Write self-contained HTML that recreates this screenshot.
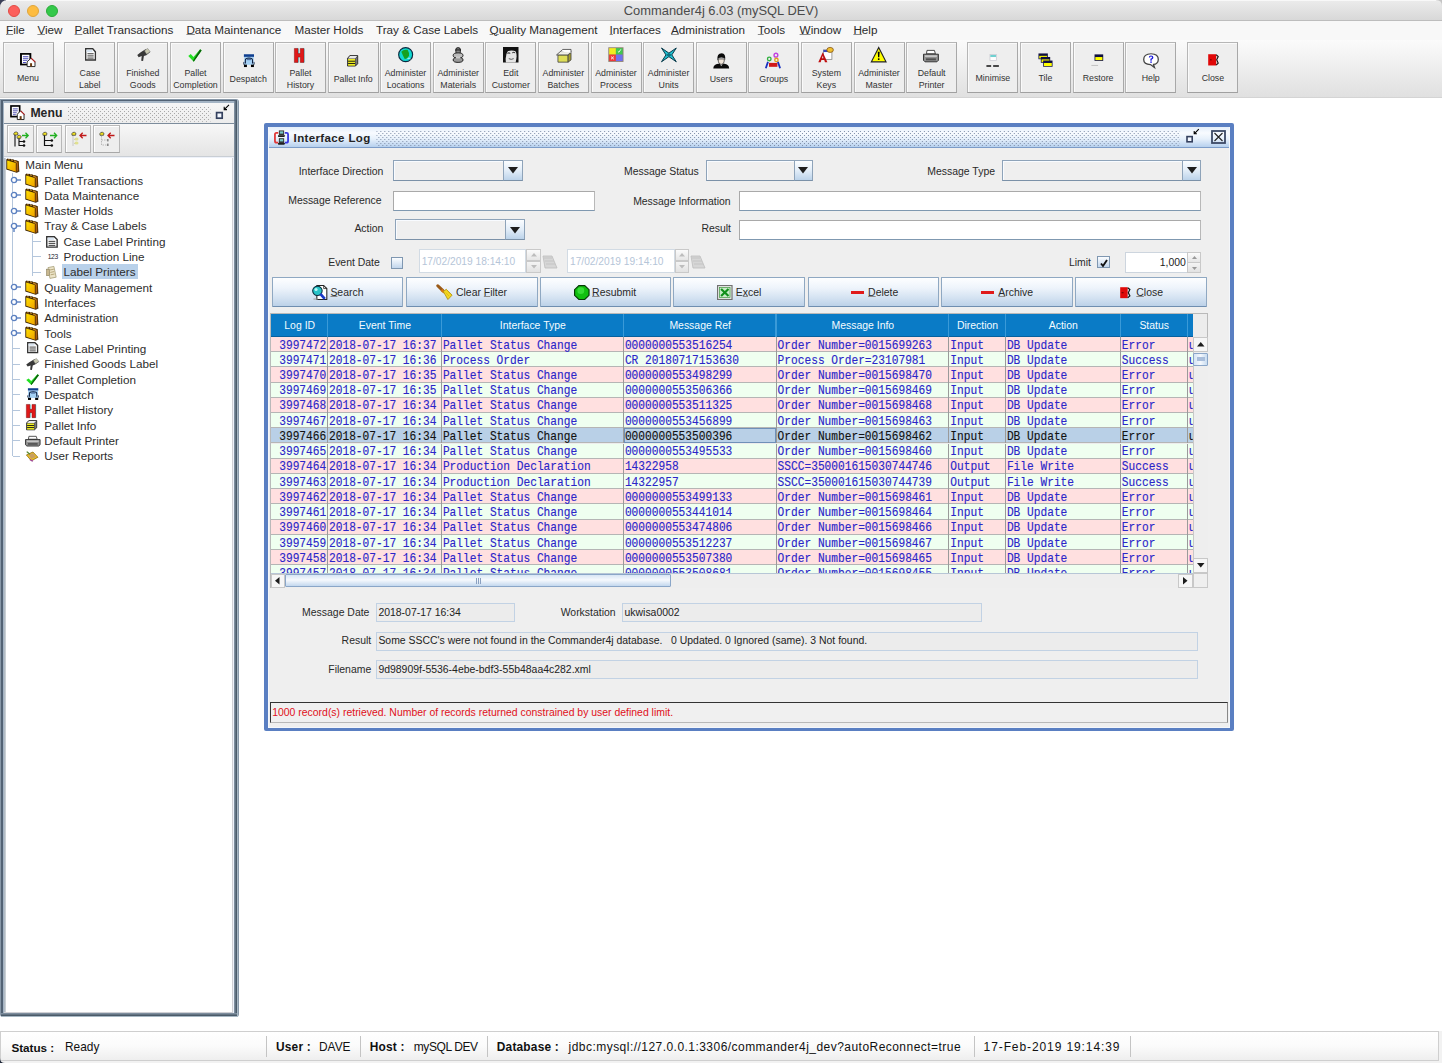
<!DOCTYPE html><html><head><meta charset="utf-8"><style>
*{box-sizing:border-box;margin:0;padding:0}
html,body{width:1442px;height:1063px;overflow:hidden;background:#fff;font-family:"Liberation Sans",sans-serif;color:#222}
.a{position:absolute;display:block}
.t{position:absolute;white-space:pre}
svg.a{overflow:visible}
u{text-decoration:underline;text-decoration-color:#8a8a8a;text-decoration-thickness:1px;text-underline-offset:0.4px}
</style></head><body>
<svg width="0" height="0" style="position:absolute"><defs><linearGradient id="fg" x1="0" y1="0" x2="1" y2="1"><stop offset="0" stop-color="#ffe000"/><stop offset="1" stop-color="#f0a000"/></linearGradient></defs></svg>
<div class="a" style="left:0.00px;top:0.00px;width:1442.00px;height:21.00px;background:linear-gradient(#ececec,#d8d8d8);border-bottom:1px solid #bdbdbd"></div>
<div class="a" style="left:7.60px;top:4.60px;width:12.00px;height:12.00px;border-radius:50%;background:#fc605c;border:0.5px solid #e24b45"></div>
<div class="a" style="left:26.70px;top:4.60px;width:12.00px;height:12.00px;border-radius:50%;background:#fdbc40;border:0.5px solid #e0a53a"></div>
<div class="a" style="left:45.80px;top:4.60px;width:12.00px;height:12.00px;border-radius:50%;background:#34c84a;border:0.5px solid #2aac38"></div>
<div class="t" style="top:3.63px;font-size:12.9px;line-height:14.41px;color:#4b4b4b;font-family:'Liberation Sans',sans-serif;left:421.00px;width:600px;text-align:center;">Commander4j 6.03 (mySQL DEV)</div>
<svg class="a" style="left:0.00px;top:0.00px" width="8.00" height="8.00" viewBox="0 0 8 8"><path d="M0 0 H8 Q0 0 0 8Z" fill="#3a4058"/></svg>
<div class="a" style="left:6.00px;top:0.00px;width:1430.00px;height:1.20px;background:#f8f8f8"></div>
<svg class="a" style="left:1436.00px;top:0.00px" width="6.00" height="6.00" viewBox="0 0 6 6"><path d="M6 0 H0 Q6 0 6 6Z" fill="#c4c4c4"/></svg>
<div class="a" style="left:0.00px;top:21.00px;width:1442.00px;height:19.00px;background:#f8f8f8"></div>
<div class="t" style="top:23.11px;font-size:11.7px;line-height:13.07px;color:#2b2b2b;font-family:'Liberation Sans',sans-serif;left:6.00px;"><u>F</u>ile</div>
<div class="t" style="top:23.11px;font-size:11.7px;line-height:13.07px;color:#2b2b2b;font-family:'Liberation Sans',sans-serif;left:37.40px;"><u>V</u>iew</div>
<div class="t" style="top:23.11px;font-size:11.7px;line-height:13.07px;color:#2b2b2b;font-family:'Liberation Sans',sans-serif;left:74.60px;"><u>P</u>allet Transactions</div>
<div class="t" style="top:23.11px;font-size:11.7px;line-height:13.07px;color:#2b2b2b;font-family:'Liberation Sans',sans-serif;left:186.40px;"><u>D</u>ata Maintenance</div>
<div class="t" style="top:23.11px;font-size:11.7px;line-height:13.07px;color:#2b2b2b;font-family:'Liberation Sans',sans-serif;left:294.40px;">Master Holds</div>
<div class="t" style="top:23.11px;font-size:11.7px;line-height:13.07px;color:#2b2b2b;font-family:'Liberation Sans',sans-serif;left:376.00px;">Tray &amp; Case Labels</div>
<div class="t" style="top:23.11px;font-size:11.7px;line-height:13.07px;color:#2b2b2b;font-family:'Liberation Sans',sans-serif;left:489.60px;"><u>Q</u>uality Management</div>
<div class="t" style="top:23.11px;font-size:11.7px;line-height:13.07px;color:#2b2b2b;font-family:'Liberation Sans',sans-serif;left:609.60px;"><u>I</u>nterfaces</div>
<div class="t" style="top:23.11px;font-size:11.7px;line-height:13.07px;color:#2b2b2b;font-family:'Liberation Sans',sans-serif;left:671.00px;"><u>A</u>dministration</div>
<div class="t" style="top:23.11px;font-size:11.7px;line-height:13.07px;color:#2b2b2b;font-family:'Liberation Sans',sans-serif;left:757.80px;"><u>T</u>ools</div>
<div class="t" style="top:23.11px;font-size:11.7px;line-height:13.07px;color:#2b2b2b;font-family:'Liberation Sans',sans-serif;left:799.60px;"><u>W</u>indow</div>
<div class="t" style="top:23.11px;font-size:11.7px;line-height:13.07px;color:#2b2b2b;font-family:'Liberation Sans',sans-serif;left:853.40px;"><u>H</u>elp</div>
<div class="a" style="left:0.00px;top:40.00px;width:1442.00px;height:58.00px;background:linear-gradient(#fbfbfb,#e0e0e0);border-bottom:1px solid #d4d4d4"></div>
<div class="a" style="left:2.50px;top:42.20px;width:51.00px;height:51.00px;background:#eeeeee;border:1px solid #b6b6b6;border-right-color:#a8a8a8;border-bottom-color:#a0a0a0;box-shadow:inset 1px 1px 0 #fafafa"></div>
<svg class="a" style="left:20px;top:53.3px" width="15.8" height="14.2" viewBox="0 0 16 16" preserveAspectRatio="none"><rect x="1" y="1" width="9.5" height="12" fill="#fff" stroke="#000" stroke-width="1.9"/>
<path d="M3 4.2h5.5M3 6.4h5.5M3 8.6h4.5M3 10.8h3" stroke="#4848b8" stroke-width="1.1"/>
<path d="M7.2 10 L11.2 5.8 L15.2 10 V15.3 H7.2 Z" fill="#fff" stroke="#222" stroke-width="1"/>
<path d="M11.2 5.8 L15.5 10.3" stroke="#b02020" stroke-width="1.3"/>
<rect x="10.2" y="11.5" width="2" height="3.8" fill="#6b3a10"/></svg>
<div class="t" style="top:74.14px;font-size:8.8px;line-height:9.83px;color:#333;font-family:'Liberation Sans',sans-serif;left:-272.00px;width:600px;text-align:center;transform:scaleY(1.08);transform-origin:0 80%;">Menu</div>
<div class="a" style="left:64.30px;top:42.20px;width:51.00px;height:51.00px;background:#eeeeee;border:1px solid #b6b6b6;border-right-color:#a8a8a8;border-bottom-color:#a0a0a0;box-shadow:inset 1px 1px 0 #fafafa"></div>
<svg class="a" style="left:85px;top:47.9px" width="11.1" height="12.8" viewBox="0 0 16 16" preserveAspectRatio="none"><path d="M1 1 H11.2 L15 4.8 V15 H1 Z" fill="#fff" stroke="#333" stroke-width="1.9"/>
<rect x="2.2" y="2.2" width="8.5" height="3" fill="#d8e4f0"/>
<path d="M3.5 7.2 H12.5 M3.5 9.9 H12.5 M3.5 12.6 H12.5" stroke="#222" stroke-width="1.2"/></svg>
<div class="t" style="top:68.64px;font-size:8.8px;line-height:9.83px;color:#333;font-family:'Liberation Sans',sans-serif;left:-210.20px;width:600px;text-align:center;transform:scaleY(1.08);transform-origin:0 80%;">Case</div>
<div class="t" style="top:80.54px;font-size:8.8px;line-height:9.83px;color:#333;font-family:'Liberation Sans',sans-serif;left:-210.20px;width:600px;text-align:center;transform:scaleY(1.08);transform-origin:0 80%;">Label</div>
<div class="a" style="left:117.30px;top:42.20px;width:51.00px;height:51.00px;background:#eeeeee;border:1px solid #b6b6b6;border-right-color:#a8a8a8;border-bottom-color:#a0a0a0;box-shadow:inset 1px 1px 0 #fafafa"></div>
<svg class="a" style="left:137px;top:47.9px" width="13.5" height="13.3" viewBox="0 0 16 16" preserveAspectRatio="none"><path d="M0.3 8.5 L4 5.5 L10 1.5 L15.7 4.8 L11 8.6 L8.2 9.6 L7.2 15.7 L5 15.2 L5.6 9.6 L2 11 Z" fill="#383838"/>
<path d="M8.8 3.2 L12.6 0.5 L15.7 4.5 L11.4 7.4 Z" fill="#c8c8b0" stroke="#666" stroke-width="0.5"/></svg>
<div class="t" style="top:68.64px;font-size:8.8px;line-height:9.83px;color:#333;font-family:'Liberation Sans',sans-serif;left:-157.20px;width:600px;text-align:center;transform:scaleY(1.08);transform-origin:0 80%;">Finished</div>
<div class="t" style="top:80.54px;font-size:8.8px;line-height:9.83px;color:#333;font-family:'Liberation Sans',sans-serif;left:-157.20px;width:600px;text-align:center;transform:scaleY(1.08);transform-origin:0 80%;">Goods</div>
<div class="a" style="left:170.00px;top:42.20px;width:51.00px;height:51.00px;background:#eeeeee;border:1px solid #b6b6b6;border-right-color:#a8a8a8;border-bottom-color:#a0a0a0;box-shadow:inset 1px 1px 0 #fafafa"></div>
<svg class="a" style="left:188.3px;top:48.7px" width="13.9" height="13.1" viewBox="0 0 16 16" preserveAspectRatio="none"><path d="M0.3 8.5 L3.2 6.2 L6.3 9.8 L14 0.3 L15.7 1.8 L6.6 15.7 Z" fill="#22e022"/>
<path d="M14 0.3 L15.7 1.8 L6.6 15.7 L5.8 14.2 Z" fill="#0b600b"/></svg>
<div class="t" style="top:68.64px;font-size:8.8px;line-height:9.83px;color:#333;font-family:'Liberation Sans',sans-serif;left:-104.50px;width:600px;text-align:center;transform:scaleY(1.08);transform-origin:0 80%;">Pallet</div>
<div class="t" style="top:80.54px;font-size:8.8px;line-height:9.83px;color:#333;font-family:'Liberation Sans',sans-serif;left:-104.50px;width:600px;text-align:center;transform:scaleY(1.08);transform-origin:0 80%;">Completion</div>
<div class="a" style="left:222.70px;top:42.20px;width:51.00px;height:51.00px;background:#eeeeee;border:1px solid #b6b6b6;border-right-color:#a8a8a8;border-bottom-color:#a0a0a0;box-shadow:inset 1px 1px 0 #fafafa"></div>
<svg class="a" style="left:243px;top:53.7px" width="11.9" height="13.3" viewBox="0 0 16 16" preserveAspectRatio="none"><rect x="1.2" y="0.3" width="13.6" height="3.2" fill="#0f3f90"/>
<path d="M1.5 3.5 H14.5 V13 H1.5Z" fill="#a4d0f4"/>
<path d="M3.2 11.5 V7.5 Q3.2 5 8 5 Q12.8 5 12.8 7.5 V11.5" fill="none" stroke="#102040" stroke-width="1.4"/>
<rect x="5.2" y="5.6" width="5.6" height="1.8" fill="#5070a0"/>
<path d="M1.2 9.5 Q0.3 13 2 13.2 M14.8 9.5 Q15.7 13 14 13.2" stroke="#102040" stroke-width="1.1" fill="none"/>
<rect x="1.3" y="12.8" width="4" height="2.9" fill="#000"/><rect x="10.7" y="12.8" width="4" height="2.9" fill="#000"/></svg>
<div class="t" style="top:75.34px;font-size:8.8px;line-height:9.83px;color:#333;font-family:'Liberation Sans',sans-serif;left:-51.80px;width:600px;text-align:center;transform:scaleY(1.08);transform-origin:0 80%;">Despatch</div>
<div class="a" style="left:275.00px;top:42.20px;width:51.00px;height:51.00px;background:#eeeeee;border:1px solid #b6b6b6;border-right-color:#a8a8a8;border-bottom-color:#a0a0a0;box-shadow:inset 1px 1px 0 #fafafa"></div>
<svg class="a" style="left:294px;top:47.6px" width="11.8" height="14.9" viewBox="0 0 16 16" preserveAspectRatio="none"><path d="M2 0.5 H6.8 V6 H9.8 V0.5 H14.5 V15.5 H9.8 V9.8 H6.8 V15.5 H2 Z" fill="#6ff0f8"/>
<path d="M0.5 0.5 H5.5 V6 H8.5 V0.5 H13.5 V15.5 H8.5 V9.8 H5.5 V15.5 H0.5 Z" fill="#e01818" stroke="#801010" stroke-width="0.6"/></svg>
<div class="t" style="top:68.64px;font-size:8.8px;line-height:9.83px;color:#333;font-family:'Liberation Sans',sans-serif;left:0.50px;width:600px;text-align:center;transform:scaleY(1.08);transform-origin:0 80%;">Pallet</div>
<div class="t" style="top:80.54px;font-size:8.8px;line-height:9.83px;color:#333;font-family:'Liberation Sans',sans-serif;left:0.50px;width:600px;text-align:center;transform:scaleY(1.08);transform-origin:0 80%;">History</div>
<div class="a" style="left:327.70px;top:42.20px;width:51.00px;height:51.00px;background:#eeeeee;border:1px solid #b6b6b6;border-right-color:#a8a8a8;border-bottom-color:#a0a0a0;box-shadow:inset 1px 1px 0 #fafafa"></div>
<svg class="a" style="left:346.8px;top:55.3px" width="11.3" height="11.7" viewBox="0 0 16 16" preserveAspectRatio="none"><path d="M0.8 4.5 L4 0.8 H15.2 V12 L12 15.2 H0.8 Z" fill="#444" stroke="#111" stroke-width="1"/>
<path d="M1.5 4.8 L4.3 1.5 H14.4 L11.6 4.8 Z" fill="#e8e8e8"/>
<rect x="1.6" y="5.4" width="9.8" height="9.2" fill="#f0ee20"/>
<path d="M1.6 8.5 H11.4 M1.6 11.6 H11.4" stroke="#111" stroke-width="1.3"/>
<path d="M12.2 5.4 L14.5 2.5 V11.5 L12.2 14.2Z" fill="#777"/></svg>
<div class="t" style="top:74.84px;font-size:8.8px;line-height:9.83px;color:#333;font-family:'Liberation Sans',sans-serif;left:53.20px;width:600px;text-align:center;transform:scaleY(1.08);transform-origin:0 80%;">Pallet Info</div>
<div class="a" style="left:380.00px;top:42.20px;width:51.00px;height:51.00px;background:#eeeeee;border:1px solid #b6b6b6;border-right-color:#a8a8a8;border-bottom-color:#a0a0a0;box-shadow:inset 1px 1px 0 #fafafa"></div>
<svg class="a" style="left:397.8px;top:47.2px" width="15.3" height="15.3" viewBox="0 0 16 16" preserveAspectRatio="none"><circle cx="8" cy="8" r="7.3" fill="#10d8d0" stroke="#0a2a40" stroke-width="1.2"/>
<path d="M3.5 5 Q6 2 10 3 Q12 6 11.5 9 Q10 12.5 7 12.5 Q5 9 3.5 5Z" fill="#16a01e"/>
<path d="M10 12 Q12 11 13 12.5" stroke="#d0f0f0" stroke-width="1" fill="none"/></svg>
<div class="t" style="top:68.64px;font-size:8.8px;line-height:9.83px;color:#333;font-family:'Liberation Sans',sans-serif;left:105.50px;width:600px;text-align:center;transform:scaleY(1.08);transform-origin:0 80%;">Administer</div>
<div class="t" style="top:80.54px;font-size:8.8px;line-height:9.83px;color:#333;font-family:'Liberation Sans',sans-serif;left:105.50px;width:600px;text-align:center;transform:scaleY(1.08);transform-origin:0 80%;">Locations</div>
<div class="a" style="left:432.70px;top:42.20px;width:51.00px;height:51.00px;background:#eeeeee;border:1px solid #b6b6b6;border-right-color:#a8a8a8;border-bottom-color:#a0a0a0;box-shadow:inset 1px 1px 0 #fafafa"></div>
<svg class="a" style="left:452px;top:46.8px" width="12.2" height="15.9" viewBox="0 0 16 16" preserveAspectRatio="none"><ellipse cx="8" cy="3" rx="3.2" ry="2.4" fill="#777" stroke="#111" stroke-width="1"/>
<rect x="5.2" y="3" width="5.6" height="3.5" fill="#888" stroke="#111" stroke-width="0.9"/>
<ellipse cx="8" cy="8.5" rx="6.5" ry="2.6" fill="#bbb" stroke="#111" stroke-width="1"/>
<ellipse cx="8" cy="13" rx="6.5" ry="2.5" fill="#999" stroke="#111" stroke-width="1"/>
<rect x="5" y="9.5" width="6" height="2" fill="#ccc"/></svg>
<div class="t" style="top:68.64px;font-size:8.8px;line-height:9.83px;color:#333;font-family:'Liberation Sans',sans-serif;left:158.20px;width:600px;text-align:center;transform:scaleY(1.08);transform-origin:0 80%;">Administer</div>
<div class="t" style="top:80.54px;font-size:8.8px;line-height:9.83px;color:#333;font-family:'Liberation Sans',sans-serif;left:158.20px;width:600px;text-align:center;transform:scaleY(1.08);transform-origin:0 80%;">Materials</div>
<div class="a" style="left:485.30px;top:42.20px;width:51.00px;height:51.00px;background:#eeeeee;border:1px solid #b6b6b6;border-right-color:#a8a8a8;border-bottom-color:#a0a0a0;box-shadow:inset 1px 1px 0 #fafafa"></div>
<svg class="a" style="left:503px;top:46.8px" width="15.5" height="15.5" viewBox="0 0 16 16" preserveAspectRatio="none"><rect x="0" y="0" width="16" height="16" fill="#111"/>
<path d="M3 16 Q2 8 5 4 Q9 1.5 13 4 Q15 9 13 16Z" fill="#e4e4e4"/>
<path d="M4.5 6.5 Q6 5.5 7.5 6.5 M9.5 6 Q11 5 12.5 6" stroke="#333" stroke-width="1"/>
<path d="M6 12 Q8.5 13.5 11 12" stroke="#555" stroke-width="1" fill="none"/>
<path d="M3 0 Q8 3 14 1 V5 Q9 2 3 5Z" fill="#111"/></svg>
<div class="t" style="top:68.64px;font-size:8.8px;line-height:9.83px;color:#333;font-family:'Liberation Sans',sans-serif;left:210.80px;width:600px;text-align:center;transform:scaleY(1.08);transform-origin:0 80%;">Edit</div>
<div class="t" style="top:80.54px;font-size:8.8px;line-height:9.83px;color:#333;font-family:'Liberation Sans',sans-serif;left:210.80px;width:600px;text-align:center;transform:scaleY(1.08);transform-origin:0 80%;">Customer</div>
<div class="a" style="left:537.90px;top:42.20px;width:51.00px;height:51.00px;background:#eeeeee;border:1px solid #b6b6b6;border-right-color:#a8a8a8;border-bottom-color:#a0a0a0;box-shadow:inset 1px 1px 0 #fafafa"></div>
<svg class="a" style="left:555.5px;top:48.7px" width="15.5" height="13.6" viewBox="0 0 16 16" preserveAspectRatio="none"><path d="M2 7 H12.5 V15.5 H2 Z" fill="#dede58" stroke="#444" stroke-width="0.9"/>
<path d="M12.5 7 L15.5 4.3 V12.8 L12.5 15.5Z" fill="#a8a030" stroke="#444" stroke-width="0.9"/>
<path d="M0.5 7 L4.5 3 H15.5 L12.5 7Z" fill="#f0f0e8" stroke="#444" stroke-width="0.9"/>
<path d="M4.5 3 L7 0.5 H15.5 V4.3" fill="#fff" stroke="#444" stroke-width="0.9"/></svg>
<div class="t" style="top:68.64px;font-size:8.8px;line-height:9.83px;color:#333;font-family:'Liberation Sans',sans-serif;left:263.40px;width:600px;text-align:center;transform:scaleY(1.08);transform-origin:0 80%;">Administer</div>
<div class="t" style="top:80.54px;font-size:8.8px;line-height:9.83px;color:#333;font-family:'Liberation Sans',sans-serif;left:263.40px;width:600px;text-align:center;transform:scaleY(1.08);transform-origin:0 80%;">Batches</div>
<div class="a" style="left:590.50px;top:42.20px;width:51.00px;height:51.00px;background:#eeeeee;border:1px solid #b6b6b6;border-right-color:#a8a8a8;border-bottom-color:#a0a0a0;box-shadow:inset 1px 1px 0 #fafafa"></div>
<svg class="a" style="left:607.9px;top:46.6px" width="15.8" height="15.2" viewBox="0 0 16 16" preserveAspectRatio="none"><rect x="0.3" y="0.3" width="15.4" height="15.4" fill="#908070"/>
<rect x="1.2" y="1.2" width="6.8" height="6.8" fill="#f0ee20"/><rect x="8" y="1.2" width="6.8" height="6.8" fill="#40c850"/>
<rect x="1.2" y="8" width="6.8" height="6.8" fill="#f03838"/><rect x="8" y="8" width="6.8" height="6.8" fill="#7070f0"/>
<path d="M10 4.5 L11 5.5 L13 2.5" stroke="#fff" stroke-width="0.9" fill="none"/><path d="M3 10 L6 13 M6 10 L3 13" stroke="#fff" stroke-width="0.9"/></svg>
<div class="t" style="top:68.64px;font-size:8.8px;line-height:9.83px;color:#333;font-family:'Liberation Sans',sans-serif;left:316.00px;width:600px;text-align:center;transform:scaleY(1.08);transform-origin:0 80%;">Administer</div>
<div class="t" style="top:80.54px;font-size:8.8px;line-height:9.83px;color:#333;font-family:'Liberation Sans',sans-serif;left:316.00px;width:600px;text-align:center;transform:scaleY(1.08);transform-origin:0 80%;">Process</div>
<div class="a" style="left:643.10px;top:42.20px;width:51.00px;height:51.00px;background:#eeeeee;border:1px solid #b6b6b6;border-right-color:#a8a8a8;border-bottom-color:#a0a0a0;box-shadow:inset 1px 1px 0 #fafafa"></div>
<svg class="a" style="left:660.6px;top:46.6px" width="15.8" height="15.8" viewBox="0 0 16 16" preserveAspectRatio="none"><path d="M0.5 1 L8 6.2 L15.5 1 L11 8 L15.5 15 L8 9.8 L0.5 15 L5 8Z" fill="#20c0d0" stroke="#083848" stroke-width="1"/>
<path d="M5 8 L8 6.2 L11 8 L8 9.8Z" fill="#0a7080"/></svg>
<div class="t" style="top:68.64px;font-size:8.8px;line-height:9.83px;color:#333;font-family:'Liberation Sans',sans-serif;left:368.60px;width:600px;text-align:center;transform:scaleY(1.08);transform-origin:0 80%;">Administer</div>
<div class="t" style="top:80.54px;font-size:8.8px;line-height:9.83px;color:#333;font-family:'Liberation Sans',sans-serif;left:368.60px;width:600px;text-align:center;transform:scaleY(1.08);transform-origin:0 80%;">Units</div>
<div class="a" style="left:695.70px;top:42.20px;width:51.00px;height:51.00px;background:#eeeeee;border:1px solid #b6b6b6;border-right-color:#a8a8a8;border-bottom-color:#a0a0a0;box-shadow:inset 1px 1px 0 #fafafa"></div>
<svg class="a" style="left:712.6px;top:52.6px" width="16.5" height="15.8" viewBox="0 0 16 16" preserveAspectRatio="none"><path d="M0.3 15.7 Q0.5 11.5 5 11 H11 Q15.5 11.5 15.7 15.7Z" fill="#0a0a0a"/>
<path d="M6.5 11 L8 13.5 L9.5 11Z" fill="#ddd"/>
<path d="M5 6 Q5 11.5 8 11.5 Q11 11.5 11 6Z" fill="#f0e4d8" stroke="#222" stroke-width="0.7"/>
<path d="M4.3 7.5 Q3.5 0.3 8.5 0.3 Q12.5 0.5 11.8 7 L10.8 5 Q8 4 5.5 5Z" fill="#0a0a0a"/></svg>
<div class="t" style="top:74.84px;font-size:8.8px;line-height:9.83px;color:#333;font-family:'Liberation Sans',sans-serif;left:421.20px;width:600px;text-align:center;transform:scaleY(1.08);transform-origin:0 80%;">Users</div>
<div class="a" style="left:748.30px;top:42.20px;width:51.00px;height:51.00px;background:#eeeeee;border:1px solid #b6b6b6;border-right-color:#a8a8a8;border-bottom-color:#a0a0a0;box-shadow:inset 1px 1px 0 #fafafa"></div>
<svg class="a" style="left:765.3px;top:52.6px" width="15.9" height="15.8" viewBox="0 0 16 16" preserveAspectRatio="none"><circle cx="11" cy="2.2" r="1.9" fill="none" stroke="#c040e0" stroke-width="1.4"/>
<circle cx="4.3" cy="6" r="1.8" fill="none" stroke="#30b040" stroke-width="1.4"/>
<circle cx="11.5" cy="7" r="1.7" fill="none" stroke="#e0a020" stroke-width="1.4"/>
<path d="M4 10 H12.5 V14 H4Z" fill="#d01818"/>
<path d="M0.8 15.5 L3 9 M15.2 15.5 L13 9" stroke="#1830c0" stroke-width="1.8"/></svg>
<div class="t" style="top:74.84px;font-size:8.8px;line-height:9.83px;color:#333;font-family:'Liberation Sans',sans-serif;left:473.80px;width:600px;text-align:center;transform:scaleY(1.08);transform-origin:0 80%;">Groups</div>
<div class="a" style="left:800.90px;top:42.20px;width:51.00px;height:51.00px;background:#eeeeee;border:1px solid #b6b6b6;border-right-color:#a8a8a8;border-bottom-color:#a0a0a0;box-shadow:inset 1px 1px 0 #fafafa"></div>
<svg class="a" style="left:818px;top:46.8px" width="15.9" height="15.5" viewBox="0 0 16 16" preserveAspectRatio="none"><rect x="5.5" y="3" width="8.5" height="10" fill="#fff" stroke="#888" stroke-width="0.8"/>
<rect x="5.5" y="3" width="8.5" height="2.2" fill="#3848b8"/>
<path d="M0.3 15.7 L4.8 5.5 L9.5 15.7 H7 L6.3 13.5 H3.4 L2.7 15.7Z M4 11.5 H5.7 L4.85 9Z" fill="#c01010"/>
<ellipse cx="12.2" cy="3" rx="3.3" ry="2.6" fill="#f0c030" stroke="#805010" stroke-width="0.8"/></svg>
<div class="t" style="top:68.64px;font-size:8.8px;line-height:9.83px;color:#333;font-family:'Liberation Sans',sans-serif;left:526.40px;width:600px;text-align:center;transform:scaleY(1.08);transform-origin:0 80%;">System</div>
<div class="t" style="top:80.54px;font-size:8.8px;line-height:9.83px;color:#333;font-family:'Liberation Sans',sans-serif;left:526.40px;width:600px;text-align:center;transform:scaleY(1.08);transform-origin:0 80%;">Keys</div>
<div class="a" style="left:853.50px;top:42.20px;width:51.00px;height:51.00px;background:#eeeeee;border:1px solid #b6b6b6;border-right-color:#a8a8a8;border-bottom-color:#a0a0a0;box-shadow:inset 1px 1px 0 #fafafa"></div>
<svg class="a" style="left:870.9px;top:46.8px" width="15.4" height="15.5" viewBox="0 0 16 16" preserveAspectRatio="none"><path d="M8 0.6 L15.6 15.3 H0.4Z" fill="#ffff00" stroke="#222" stroke-width="1.2"/>
<path d="M7 5 H9 L8.6 10.5 H7.4Z" fill="#000"/><rect x="7.2" y="11.7" width="1.6" height="1.7" fill="#000"/></svg>
<div class="t" style="top:68.64px;font-size:8.8px;line-height:9.83px;color:#333;font-family:'Liberation Sans',sans-serif;left:579.00px;width:600px;text-align:center;transform:scaleY(1.08);transform-origin:0 80%;">Administer</div>
<div class="t" style="top:80.54px;font-size:8.8px;line-height:9.83px;color:#333;font-family:'Liberation Sans',sans-serif;left:579.00px;width:600px;text-align:center;transform:scaleY(1.08);transform-origin:0 80%;">Master</div>
<div class="a" style="left:906.10px;top:42.20px;width:51.00px;height:51.00px;background:#eeeeee;border:1px solid #b6b6b6;border-right-color:#a8a8a8;border-bottom-color:#a0a0a0;box-shadow:inset 1px 1px 0 #fafafa"></div>
<svg class="a" style="left:923.3px;top:50.1px" width="15.9" height="12.2" viewBox="0 0 16 16" preserveAspectRatio="none"><path d="M4 0.5 H11.5 L12.5 5 H3.5Z" fill="#fff" stroke="#333" stroke-width="1"/>
<path d="M0.5 5.5 H15.5 V13.5 L14 15.5 H2 L0.5 13.5Z" fill="#909090" stroke="#222" stroke-width="1"/>
<rect x="2" y="7" width="12" height="2" fill="#d0d0d0"/>
<rect x="3" y="11" width="10" height="2.5" fill="#505050"/></svg>
<div class="t" style="top:68.64px;font-size:8.8px;line-height:9.83px;color:#333;font-family:'Liberation Sans',sans-serif;left:631.60px;width:600px;text-align:center;transform:scaleY(1.08);transform-origin:0 80%;">Default</div>
<div class="t" style="top:80.54px;font-size:8.8px;line-height:9.83px;color:#333;font-family:'Liberation Sans',sans-serif;left:631.60px;width:600px;text-align:center;transform:scaleY(1.08);transform-origin:0 80%;">Printer</div>
<div class="a" style="left:967.40px;top:42.20px;width:51.00px;height:51.00px;background:#eeeeee;border:1px solid #b6b6b6;border-right-color:#a8a8a8;border-bottom-color:#a0a0a0;box-shadow:inset 1px 1px 0 #fafafa"></div>
<svg class="a" style="left:986.1px;top:54.1px" width="13.3" height="12.8" viewBox="0 0 16 16" preserveAspectRatio="none"><rect x="4.8" y="0.8" width="7.6" height="7.5" fill="#fff" stroke="#c8c8d0" stroke-width="0.9"/>
<rect x="5.2" y="1.2" width="6.8" height="2.6" fill="#70d0d0"/>
<path d="M0.5 15 H6.2 M8.6 15 H15.5" stroke="#111" stroke-width="1.6"/></svg>
<div class="t" style="top:73.54px;font-size:8.8px;line-height:9.83px;color:#333;font-family:'Liberation Sans',sans-serif;left:692.90px;width:600px;text-align:center;transform:scaleY(1.08);transform-origin:0 80%;">Minimise</div>
<div class="a" style="left:1020.00px;top:42.20px;width:51.00px;height:51.00px;background:#eeeeee;border:1px solid #b6b6b6;border-right-color:#a8a8a8;border-bottom-color:#a0a0a0;box-shadow:inset 1px 1px 0 #fafafa"></div>
<svg class="a" style="left:1038px;top:52.7px" width="15" height="14.2" viewBox="0 0 16 16" preserveAspectRatio="none"><rect x="0.5" y="0.5" width="10" height="6.5" fill="#101040"/><rect x="1.3" y="3.2" width="8.4" height="3" fill="#f0f000"/>
<rect x="3" y="4.5" width="10" height="6.5" fill="#101040"/><rect x="3.8" y="7.2" width="8.4" height="3" fill="#f0f000"/>
<rect x="5.5" y="8.5" width="10" height="7" fill="#101040"/><rect x="6.3" y="11.3" width="8.4" height="3.4" fill="#ffff00"/></svg>
<div class="t" style="top:73.54px;font-size:8.8px;line-height:9.83px;color:#333;font-family:'Liberation Sans',sans-serif;left:745.50px;width:600px;text-align:center;transform:scaleY(1.08);transform-origin:0 80%;">Tile</div>
<div class="a" style="left:1072.60px;top:42.20px;width:51.00px;height:51.00px;background:#eeeeee;border:1px solid #b6b6b6;border-right-color:#a8a8a8;border-bottom-color:#a0a0a0;box-shadow:inset 1px 1px 0 #fafafa"></div>
<svg class="a" style="left:1091.3px;top:54.3px" width="12.6" height="12.2" viewBox="0 0 16 16" preserveAspectRatio="none"><rect x="4.5" y="0.5" width="11" height="8.5" fill="#101040"/><rect x="5.5" y="4" width="9" height="4" fill="#ffff00"/>
<path d="M0.5 15 H9" stroke="#c0c0c0" stroke-width="1.3"/></svg>
<div class="t" style="top:73.54px;font-size:8.8px;line-height:9.83px;color:#333;font-family:'Liberation Sans',sans-serif;left:798.10px;width:600px;text-align:center;transform:scaleY(1.08);transform-origin:0 80%;">Restore</div>
<div class="a" style="left:1125.20px;top:42.20px;width:51.00px;height:51.00px;background:#eeeeee;border:1px solid #b6b6b6;border-right-color:#a8a8a8;border-bottom-color:#a0a0a0;box-shadow:inset 1px 1px 0 #fafafa"></div>
<svg class="a" style="left:1143.3px;top:52.9px" width="16" height="15" viewBox="0 0 16 16" preserveAspectRatio="none"><path d="M8 0.8 C13 0.8 15.3 3.5 15.3 7 C15.3 10 13 12 10.5 12.2 L11.5 15.5 L7.5 12.3 C3 12.3 0.7 10 0.7 7 C0.7 3.5 3 0.8 8 0.8Z" fill="#fff" stroke="#444" stroke-width="1.3"/>
<path d="M5.8 4.8 Q5.8 2.6 8 2.6 Q10.4 2.6 10.4 4.7 Q10.4 6.3 8.7 6.8 V8.3 H7.4 V6 Q9 5.6 9 4.8 Q9 3.8 8 3.8 Q7.1 3.8 7.1 4.8Z" fill="#1818e0"/><rect x="7.3" y="9" width="1.5" height="1.5" fill="#1818e0"/></svg>
<div class="t" style="top:73.54px;font-size:8.8px;line-height:9.83px;color:#333;font-family:'Liberation Sans',sans-serif;left:850.70px;width:600px;text-align:center;transform:scaleY(1.08);transform-origin:0 80%;">Help</div>
<div class="a" style="left:1187.40px;top:42.20px;width:51.00px;height:51.00px;background:#eeeeee;border:1px solid #b6b6b6;border-right-color:#a8a8a8;border-bottom-color:#a0a0a0;box-shadow:inset 1px 1px 0 #fafafa"></div>
<svg class="a" style="left:1207.8px;top:54.3px" width="10.7" height="11.7" viewBox="0 0 16 16" preserveAspectRatio="none"><rect x="0.3" y="0.3" width="12" height="15.4" fill="#e00808"/>
<path d="M12.3 1 L15.3 3.5 L13 8 L15.3 12.5 L12.3 15" stroke="#111" stroke-width="1.6" fill="none"/>
<rect x="3" y="7.2" width="2.5" height="1.5" fill="#700"/></svg>
<div class="t" style="top:73.54px;font-size:8.8px;line-height:9.83px;color:#333;font-family:'Liberation Sans',sans-serif;left:912.90px;width:600px;text-align:center;transform:scaleY(1.08);transform-origin:0 80%;">Close</div><div class="a" style="left:0.00px;top:98.60px;width:239.20px;height:918.40px;background:#8898a8;border-radius:0 3px 3px 3px"></div>
<div class="a" style="left:1.00px;top:99.60px;width:1.80px;height:916.40px;background:#526274"></div>
<div class="a" style="left:1.00px;top:99.60px;width:236.20px;height:1.80px;background:#526274"></div>
<div class="a" style="left:2.80px;top:101.40px;width:1.50px;height:913.00px;background:#a4b4c4"></div>
<div class="a" style="left:2.80px;top:101.40px;width:234.00px;height:1.50px;background:#a4b4c4"></div>
<div class="a" style="left:234.00px;top:101.40px;width:3.00px;height:913.00px;background:linear-gradient(90deg,#8a9aaa,#3e4e5c)"></div>
<div class="a" style="left:237.00px;top:99.60px;width:1.20px;height:916.00px;background:#a8b8c4"></div>
<div class="a" style="left:1.00px;top:1013.40px;width:236.00px;height:3.00px;background:linear-gradient(#8a9aaa,#3e4e5c)"></div>
<div class="a" style="left:1.00px;top:1016.20px;width:237.00px;height:0.80px;background:#a8b8c4"></div>
<div class="a" style="left:4.30px;top:102.90px;width:229.70px;height:910.50px;background:#eef2fa"></div>
<div class="a" style="left:4.30px;top:102.90px;width:229.70px;height:20.30px;background:linear-gradient(#f6f6f6,#ececec)"></div>
<div class="a" style="left:4.30px;top:123.00px;width:229.70px;height:1.20px;background:#7c8c9c"></div>
<svg class="a" style="left:9.50px;top:105.40px" width="15.50" height="15.50" viewBox="0 0 16 16"><rect x="1" y="1" width="9" height="11" fill="#fff" stroke="#000" stroke-width="1.7"/>
<path d="M3 4h5M3 6h5M3 8h4M3 10h3" stroke="#5050b0" stroke-width="1"/>
<path d="M7.5 9.5 L11 6 L14.5 9.5 V15 H7.5 Z" fill="#fff" stroke="#222" stroke-width="1"/>
<path d="M11 6 L15 10" stroke="#b02020" stroke-width="1.2"/>
<rect x="10" y="11.5" width="2" height="3.5" fill="#6b3a10"/></svg>
<div class="t" style="top:107.06px;font-size:12.2px;line-height:13.63px;color:#262626;font-family:'Liberation Sans',sans-serif;font-weight:bold;letter-spacing:0.05px;left:30.40px;">Menu</div>
<svg class="a" style="left:68.00px;top:106.80px" width="142.50" height="14.80" viewBox="0 0 142.5 14.8"><defs><pattern id="dp1" width="4" height="4" patternUnits="userSpaceOnUse"><rect x="0" y="0" width="1" height="1" fill="#a8a8a8"/><rect x="2" y="2" width="1" height="1" fill="#a8a8a8"/></pattern></defs><rect width="142.5" height="14.8" fill="url(#dp1)"/></svg>
<svg class="a" style="left:213.00px;top:103.00px" width="18.00" height="18.00" viewBox="0 0 18 18"><rect x="3.6" y="9.6" width="5.6" height="5.6" fill="#f4f8ff" stroke="#34405e" stroke-width="1.7"/><path d="M16 1.8 L11.2 6.6 M11.2 3.8 V6.6 H14" stroke="#000" stroke-width="1.1" fill="none"/></svg>
<div class="a" style="left:4.30px;top:124.20px;width:229.70px;height:32.60px;background:linear-gradient(#f7f7f7,#e4e4e4)"></div>
<div class="a" style="left:7.20px;top:125.40px;width:26.80px;height:27.40px;background:#eeeeee;border:1px solid #b8b8b8;border-bottom-color:#a8a8a8;box-shadow:inset 1px 1px 0 #fff"></div>
<div class="a" style="left:35.60px;top:125.40px;width:26.80px;height:27.40px;background:#eeeeee;border:1px solid #b8b8b8;border-bottom-color:#a8a8a8;box-shadow:inset 1px 1px 0 #fff"></div>
<div class="a" style="left:64.50px;top:125.40px;width:26.80px;height:27.40px;background:#eeeeee;border:1px solid #b8b8b8;border-bottom-color:#a8a8a8;box-shadow:inset 1px 1px 0 #fff"></div>
<div class="a" style="left:93.30px;top:125.40px;width:26.80px;height:27.40px;background:#eeeeee;border:1px solid #b8b8b8;border-bottom-color:#a8a8a8;box-shadow:inset 1px 1px 0 #fff"></div>
<svg class="a" style="left:13.20px;top:131.20px" width="16.00" height="16.00" viewBox="0 0 16 16"><path d="M2 3.5 V15.5" stroke="#111" stroke-width="1.1"/><path d="M6 7 V14.5 H10.5 M6 10.5 H10.5" stroke="#111" stroke-width="1.1" fill="none"/><circle cx="11" cy="10.5" r="1.3" fill="#111"/><circle cx="11" cy="14.5" r="1.3" fill="#111"/><path d="M0.8 2.5 Q1.5 0.5 3.5 1 L5 2 L4.5 4 H1Z" fill="#f0e020" stroke="#333" stroke-width="0.7"/><path d="M4 5.8 Q4.7 3.8 6.7 4.3 L8.2 5.3 L7.7 7.3 H4.2Z" fill="#f0e020" stroke="#333" stroke-width="0.7"/><path d="M9 4.5 H15 M12.5 1.8 L15.2 4.5 L12.5 7.2" stroke="#20b020" stroke-width="1.3" fill="none"/></svg>
<svg class="a" style="left:41.60px;top:131.20px" width="16.00" height="16.00" viewBox="0 0 16 16"><path d="M2.5 4 V14.5 H9.5 M2.5 9.5 H9.5" stroke="#111" stroke-width="1.2" fill="none"/><circle cx="9.8" cy="9.5" r="1.3" fill="#111"/><circle cx="9.8" cy="14.5" r="1.3" fill="#111"/><path d="M0.8 2.8 Q1.5 0.8 3.5 1.3 L5 2.3 L4.5 4.3 H1Z" fill="#f0e020" stroke="#333" stroke-width="0.7"/><path d="M8 4.5 H14.5 M12 1.8 L14.7 4.5 L12 7.2" stroke="#20b020" stroke-width="1.3" fill="none"/></svg>
<svg class="a" style="left:70.50px;top:131.20px" width="16.00" height="16.00" viewBox="0 0 16 16"><path d="M2 4 V15" stroke="#c8c8c8" stroke-width="1"/><path d="M3 8.5 H7 M3 12.5 H7" stroke="#c8c8c8" stroke-width="1"/><ellipse cx="5.5" cy="8" rx="2" ry="1.5" fill="#e0e090"/><ellipse cx="5.5" cy="12" rx="2" ry="1.5" fill="#e0e090"/><path d="M0.8 2.8 Q1.5 0.8 3.5 1.3 L5 2.3 L4.5 4.3 H1Z" fill="#f0e020" stroke="#333" stroke-width="0.7"/><path d="M9 4.5 H15.5 M11.7 1.8 L9 4.5 L11.7 7.2" stroke="#c01818" stroke-width="1.3" fill="none"/></svg>
<svg class="a" style="left:99.30px;top:131.20px" width="16.00" height="16.00" viewBox="0 0 16 16"><path d="M2.5 5 V14 H8 M2.5 9 H8" stroke="#b8b8b8" stroke-width="1" fill="none" stroke-dasharray="1.5 1"/><rect x="8" y="8" width="1.6" height="2.4" fill="#888"/><rect x="8" y="12.6" width="1.6" height="2.4" fill="#888"/><path d="M0.8 2.8 Q1.5 0.8 3.5 1.3 L5 2.3 L4.5 4.3 H1Z" fill="#f0e020" stroke="#333" stroke-width="0.7"/><path d="M9 4.5 H15.5 M11.7 1.8 L9 4.5 L11.7 7.2" stroke="#c01818" stroke-width="1.3" fill="none"/></svg>
<div class="a" style="left:4.30px;top:156.30px;width:229.70px;height:1.20px;background:#c9ced4"></div>
<div class="a" style="left:4.30px;top:157.50px;width:228.60px;height:855.00px;background:linear-gradient(90deg,#a8b2bc,#d4dade 2px,#fff 2.2px);border-right:1.3px solid #d0d0d4;border-bottom:1.3px solid #d0d0d4"></div>
<div class="a" style="left:12.00px;top:173.00px;width:1.00px;height:282.79px;background:#b4c6dc"></div>
<div class="a" style="left:31.60px;top:234.06px;width:1.00px;height:41.95px;background:#b4c6dc"></div>
<svg class="a" style="left:6.10px;top:157.60px" width="14.00" height="15.00" viewBox="0 0 14 15"><path d="M0.3 1.6 L1.6 0.4 L3 0.9 L4.2 0.7 L5.6 1.4 L7 1.3 L8.4 2 L9.6 1.9 L12.8 3.2 L13.3 13.3 L10.7 14.8 L0.3 11.4 Z" fill="#3e2400"/>
<path d="M1.2 2.4 L9.8 5.1 L9.8 13.8 L1.2 10.8 Z" fill="url(#fg)"/>
<path d="M10.5 4.9 L12.3 3.9 L12.3 12.9 L10.5 13.9 Z" fill="#a86010"/>
<path d="M2 2 L3 1.5 L4 2.3 M5 2.4 L6 2.1 L7 2.9 M8 3 L9 2.7 L10.2 3.4" stroke="#d89a30" stroke-width="0.7" fill="none"/>
<path d="M7.2 2.8 L12 3.9 L10.2 4.8 Z" fill="#f0a030"/>
<path d="M12.6 12.5 L14 13.2 L11 15 Z" fill="#000" opacity="0.35"/></svg>
<div class="t" style="top:158.21px;font-size:11.7px;line-height:13.07px;color:#2d2d2d;font-family:'Liberation Sans',sans-serif;left:25.30px;">Main Menu</div>
<svg class="a" style="left:9.50px;top:175.92px" width="12.00" height="8.00" viewBox="0 0 12 8"><circle cx="4" cy="4" r="2.6" fill="#fff" stroke="#5b80c0" stroke-width="1.4"/><path d="M6.6 4 H11" stroke="#5b80c0" stroke-width="1.4"/></svg>
<svg class="a" style="left:25.00px;top:172.72px" width="14.00" height="15.00" viewBox="0 0 14 15"><path d="M0.3 1.6 L1.6 0.4 L3 0.9 L4.2 0.7 L5.6 1.4 L7 1.3 L8.4 2 L9.6 1.9 L12.8 3.2 L13.3 13.3 L10.7 14.8 L0.3 11.4 Z" fill="#3e2400"/>
<path d="M1.2 2.4 L9.8 5.1 L9.8 13.8 L1.2 10.8 Z" fill="url(#fg)"/>
<path d="M10.5 4.9 L12.3 3.9 L12.3 12.9 L10.5 13.9 Z" fill="#a86010"/>
<path d="M2 2 L3 1.5 L4 2.3 M5 2.4 L6 2.1 L7 2.9 M8 3 L9 2.7 L10.2 3.4" stroke="#d89a30" stroke-width="0.7" fill="none"/>
<path d="M7.2 2.8 L12 3.9 L10.2 4.8 Z" fill="#f0a030"/>
<path d="M12.6 12.5 L14 13.2 L11 15 Z" fill="#000" opacity="0.35"/></svg>
<div class="t" style="top:173.53px;font-size:11.7px;line-height:13.07px;color:#2d2d2d;font-family:'Liberation Sans',sans-serif;left:44.30px;">Pallet Transactions</div>
<svg class="a" style="left:9.50px;top:191.23px" width="12.00" height="8.00" viewBox="0 0 12 8"><circle cx="4" cy="4" r="2.6" fill="#fff" stroke="#5b80c0" stroke-width="1.4"/><path d="M6.6 4 H11" stroke="#5b80c0" stroke-width="1.4"/></svg>
<svg class="a" style="left:25.00px;top:188.03px" width="14.00" height="15.00" viewBox="0 0 14 15"><path d="M0.3 1.6 L1.6 0.4 L3 0.9 L4.2 0.7 L5.6 1.4 L7 1.3 L8.4 2 L9.6 1.9 L12.8 3.2 L13.3 13.3 L10.7 14.8 L0.3 11.4 Z" fill="#3e2400"/>
<path d="M1.2 2.4 L9.8 5.1 L9.8 13.8 L1.2 10.8 Z" fill="url(#fg)"/>
<path d="M10.5 4.9 L12.3 3.9 L12.3 12.9 L10.5 13.9 Z" fill="#a86010"/>
<path d="M2 2 L3 1.5 L4 2.3 M5 2.4 L6 2.1 L7 2.9 M8 3 L9 2.7 L10.2 3.4" stroke="#d89a30" stroke-width="0.7" fill="none"/>
<path d="M7.2 2.8 L12 3.9 L10.2 4.8 Z" fill="#f0a030"/>
<path d="M12.6 12.5 L14 13.2 L11 15 Z" fill="#000" opacity="0.35"/></svg>
<div class="t" style="top:188.84px;font-size:11.7px;line-height:13.07px;color:#2d2d2d;font-family:'Liberation Sans',sans-serif;left:44.30px;">Data Maintenance</div>
<svg class="a" style="left:9.50px;top:206.55px" width="12.00" height="8.00" viewBox="0 0 12 8"><circle cx="4" cy="4" r="2.6" fill="#fff" stroke="#5b80c0" stroke-width="1.4"/><path d="M6.6 4 H11" stroke="#5b80c0" stroke-width="1.4"/></svg>
<svg class="a" style="left:25.00px;top:203.34px" width="14.00" height="15.00" viewBox="0 0 14 15"><path d="M0.3 1.6 L1.6 0.4 L3 0.9 L4.2 0.7 L5.6 1.4 L7 1.3 L8.4 2 L9.6 1.9 L12.8 3.2 L13.3 13.3 L10.7 14.8 L0.3 11.4 Z" fill="#3e2400"/>
<path d="M1.2 2.4 L9.8 5.1 L9.8 13.8 L1.2 10.8 Z" fill="url(#fg)"/>
<path d="M10.5 4.9 L12.3 3.9 L12.3 12.9 L10.5 13.9 Z" fill="#a86010"/>
<path d="M2 2 L3 1.5 L4 2.3 M5 2.4 L6 2.1 L7 2.9 M8 3 L9 2.7 L10.2 3.4" stroke="#d89a30" stroke-width="0.7" fill="none"/>
<path d="M7.2 2.8 L12 3.9 L10.2 4.8 Z" fill="#f0a030"/>
<path d="M12.6 12.5 L14 13.2 L11 15 Z" fill="#000" opacity="0.35"/></svg>
<div class="t" style="top:204.16px;font-size:11.7px;line-height:13.07px;color:#2d2d2d;font-family:'Liberation Sans',sans-serif;left:44.30px;">Master Holds</div>
<svg class="a" style="left:9.50px;top:221.86px" width="12.00" height="8.00" viewBox="0 0 12 8"><circle cx="4" cy="4" r="2.6" fill="#fff" stroke="#5b80c0" stroke-width="1.4"/><path d="M6.6 4 H11" stroke="#5b80c0" stroke-width="1.4"/><path d="M4 6.6 V10" stroke="#5b80c0" stroke-width="1.4"/></svg>
<svg class="a" style="left:25.00px;top:218.66px" width="14.00" height="15.00" viewBox="0 0 14 15"><path d="M0.3 1.6 L1.6 0.4 L3 0.9 L4.2 0.7 L5.6 1.4 L7 1.3 L8.4 2 L9.6 1.9 L12.8 3.2 L13.3 13.3 L10.7 14.8 L0.3 11.4 Z" fill="#3e2400"/>
<path d="M1.2 2.4 L9.8 5.1 L9.8 13.8 L1.2 10.8 Z" fill="url(#fg)"/>
<path d="M10.5 4.9 L12.3 3.9 L12.3 12.9 L10.5 13.9 Z" fill="#a86010"/>
<path d="M2 2 L3 1.5 L4 2.3 M5 2.4 L6 2.1 L7 2.9 M8 3 L9 2.7 L10.2 3.4" stroke="#d89a30" stroke-width="0.7" fill="none"/>
<path d="M7.2 2.8 L12 3.9 L10.2 4.8 Z" fill="#f0a030"/>
<path d="M12.6 12.5 L14 13.2 L11 15 Z" fill="#000" opacity="0.35"/></svg>
<div class="t" style="top:219.47px;font-size:11.7px;line-height:13.07px;color:#2d2d2d;font-family:'Liberation Sans',sans-serif;left:44.30px;">Tray &amp; Case Labels</div>
<div class="a" style="left:32.00px;top:241.18px;width:9.00px;height:1.00px;background:#b4c6dc"></div>
<svg class="a" style="left:46.4px;top:235.68px" width="11.9" height="11.9" viewBox="0 0 16 16" preserveAspectRatio="none"><path d="M1 1 H11.2 L15 4.8 V15 H1 Z" fill="#fff" stroke="#333" stroke-width="1.9"/>
<rect x="2.2" y="2.2" width="8.5" height="3" fill="#d8e4f0"/>
<path d="M3.5 7.2 H12.5 M3.5 9.9 H12.5 M3.5 12.6 H12.5" stroke="#222" stroke-width="1.2"/></svg>
<div class="t" style="top:234.79px;font-size:11.7px;line-height:13.07px;color:#2d2d2d;font-family:'Liberation Sans',sans-serif;left:63.40px;">Case Label Printing</div>
<div class="a" style="left:32.00px;top:256.49px;width:9.00px;height:1.00px;background:#b4c6dc"></div>
<svg class="a" style="left:45.5px;top:249.69px" width="13.5" height="13.5" viewBox="0 0 16 16" preserveAspectRatio="none"><text x="8" y="11" font-size="8" text-anchor="middle" fill="#223" font-family="Liberation Sans" letter-spacing="-0.5">123</text></svg>
<div class="t" style="top:250.10px;font-size:11.7px;line-height:13.07px;color:#2d2d2d;font-family:'Liberation Sans',sans-serif;left:63.40px;">Production Line</div>
<div class="a" style="left:32.00px;top:271.81px;width:9.00px;height:1.00px;background:#b4c6dc"></div>
<svg class="a" style="left:46.4px;top:265.70px" width="10.5" height="12.8" viewBox="0 0 16 16" preserveAspectRatio="none"><path d="M3 2 L12 0.5 L15.5 14 L6 15.5Z" fill="#ece4c8" stroke="#a09870" stroke-width="1"/>
<path d="M6 5 L12 4 M6.5 8 L12.5 7 M7 11 L13 10" stroke="#b0a070" stroke-width="1.2"/>
<rect x="0.5" y="4" width="5" height="8" fill="#c8b890" stroke="#8a8060" stroke-width="0.8"/></svg>
<div class="a" style="left:62.30px;top:264.41px;width:76.00px;height:14.80px;background:#b9d1ea"></div>
<div class="t" style="top:265.42px;font-size:11.7px;line-height:13.07px;color:#2d2d2d;font-family:'Liberation Sans',sans-serif;left:63.40px;">Label Printers</div>
<svg class="a" style="left:9.50px;top:283.12px" width="12.00" height="8.00" viewBox="0 0 12 8"><circle cx="4" cy="4" r="2.6" fill="#fff" stroke="#5b80c0" stroke-width="1.4"/><path d="M6.6 4 H11" stroke="#5b80c0" stroke-width="1.4"/></svg>
<svg class="a" style="left:25.00px;top:279.92px" width="14.00" height="15.00" viewBox="0 0 14 15"><path d="M0.3 1.6 L1.6 0.4 L3 0.9 L4.2 0.7 L5.6 1.4 L7 1.3 L8.4 2 L9.6 1.9 L12.8 3.2 L13.3 13.3 L10.7 14.8 L0.3 11.4 Z" fill="#3e2400"/>
<path d="M1.2 2.4 L9.8 5.1 L9.8 13.8 L1.2 10.8 Z" fill="url(#fg)"/>
<path d="M10.5 4.9 L12.3 3.9 L12.3 12.9 L10.5 13.9 Z" fill="#a86010"/>
<path d="M2 2 L3 1.5 L4 2.3 M5 2.4 L6 2.1 L7 2.9 M8 3 L9 2.7 L10.2 3.4" stroke="#d89a30" stroke-width="0.7" fill="none"/>
<path d="M7.2 2.8 L12 3.9 L10.2 4.8 Z" fill="#f0a030"/>
<path d="M12.6 12.5 L14 13.2 L11 15 Z" fill="#000" opacity="0.35"/></svg>
<div class="t" style="top:280.73px;font-size:11.7px;line-height:13.07px;color:#2d2d2d;font-family:'Liberation Sans',sans-serif;left:44.30px;">Quality Management</div>
<svg class="a" style="left:9.50px;top:298.44px" width="12.00" height="8.00" viewBox="0 0 12 8"><circle cx="4" cy="4" r="2.6" fill="#fff" stroke="#5b80c0" stroke-width="1.4"/><path d="M6.6 4 H11" stroke="#5b80c0" stroke-width="1.4"/></svg>
<svg class="a" style="left:25.00px;top:295.24px" width="14.00" height="15.00" viewBox="0 0 14 15"><path d="M0.3 1.6 L1.6 0.4 L3 0.9 L4.2 0.7 L5.6 1.4 L7 1.3 L8.4 2 L9.6 1.9 L12.8 3.2 L13.3 13.3 L10.7 14.8 L0.3 11.4 Z" fill="#3e2400"/>
<path d="M1.2 2.4 L9.8 5.1 L9.8 13.8 L1.2 10.8 Z" fill="url(#fg)"/>
<path d="M10.5 4.9 L12.3 3.9 L12.3 12.9 L10.5 13.9 Z" fill="#a86010"/>
<path d="M2 2 L3 1.5 L4 2.3 M5 2.4 L6 2.1 L7 2.9 M8 3 L9 2.7 L10.2 3.4" stroke="#d89a30" stroke-width="0.7" fill="none"/>
<path d="M7.2 2.8 L12 3.9 L10.2 4.8 Z" fill="#f0a030"/>
<path d="M12.6 12.5 L14 13.2 L11 15 Z" fill="#000" opacity="0.35"/></svg>
<div class="t" style="top:296.05px;font-size:11.7px;line-height:13.07px;color:#2d2d2d;font-family:'Liberation Sans',sans-serif;left:44.30px;">Interfaces</div>
<svg class="a" style="left:9.50px;top:313.75px" width="12.00" height="8.00" viewBox="0 0 12 8"><circle cx="4" cy="4" r="2.6" fill="#fff" stroke="#5b80c0" stroke-width="1.4"/><path d="M6.6 4 H11" stroke="#5b80c0" stroke-width="1.4"/></svg>
<svg class="a" style="left:25.00px;top:310.55px" width="14.00" height="15.00" viewBox="0 0 14 15"><path d="M0.3 1.6 L1.6 0.4 L3 0.9 L4.2 0.7 L5.6 1.4 L7 1.3 L8.4 2 L9.6 1.9 L12.8 3.2 L13.3 13.3 L10.7 14.8 L0.3 11.4 Z" fill="#3e2400"/>
<path d="M1.2 2.4 L9.8 5.1 L9.8 13.8 L1.2 10.8 Z" fill="url(#fg)"/>
<path d="M10.5 4.9 L12.3 3.9 L12.3 12.9 L10.5 13.9 Z" fill="#a86010"/>
<path d="M2 2 L3 1.5 L4 2.3 M5 2.4 L6 2.1 L7 2.9 M8 3 L9 2.7 L10.2 3.4" stroke="#d89a30" stroke-width="0.7" fill="none"/>
<path d="M7.2 2.8 L12 3.9 L10.2 4.8 Z" fill="#f0a030"/>
<path d="M12.6 12.5 L14 13.2 L11 15 Z" fill="#000" opacity="0.35"/></svg>
<div class="t" style="top:311.36px;font-size:11.7px;line-height:13.07px;color:#2d2d2d;font-family:'Liberation Sans',sans-serif;left:44.30px;">Administration</div>
<svg class="a" style="left:9.50px;top:329.06px" width="12.00" height="8.00" viewBox="0 0 12 8"><circle cx="4" cy="4" r="2.6" fill="#fff" stroke="#5b80c0" stroke-width="1.4"/><path d="M6.6 4 H11" stroke="#5b80c0" stroke-width="1.4"/></svg>
<svg class="a" style="left:25.00px;top:325.87px" width="14.00" height="15.00" viewBox="0 0 14 15"><path d="M0.3 1.6 L1.6 0.4 L3 0.9 L4.2 0.7 L5.6 1.4 L7 1.3 L8.4 2 L9.6 1.9 L12.8 3.2 L13.3 13.3 L10.7 14.8 L0.3 11.4 Z" fill="#3e2400"/>
<path d="M1.2 2.4 L9.8 5.1 L9.8 13.8 L1.2 10.8 Z" fill="url(#fg)"/>
<path d="M10.5 4.9 L12.3 3.9 L12.3 12.9 L10.5 13.9 Z" fill="#a86010"/>
<path d="M2 2 L3 1.5 L4 2.3 M5 2.4 L6 2.1 L7 2.9 M8 3 L9 2.7 L10.2 3.4" stroke="#d89a30" stroke-width="0.7" fill="none"/>
<path d="M7.2 2.8 L12 3.9 L10.2 4.8 Z" fill="#f0a030"/>
<path d="M12.6 12.5 L14 13.2 L11 15 Z" fill="#000" opacity="0.35"/></svg>
<div class="t" style="top:326.68px;font-size:11.7px;line-height:13.07px;color:#2d2d2d;font-family:'Liberation Sans',sans-serif;left:44.30px;">Tools</div>
<div class="a" style="left:12.50px;top:348.38px;width:7.50px;height:1.00px;background:#b4c6dc"></div>
<svg class="a" style="left:27.3px;top:342.48px" width="11.3" height="11.3" viewBox="0 0 16 16" preserveAspectRatio="none"><path d="M1 1 H11.2 L15 4.8 V15 H1 Z" fill="#fff" stroke="#333" stroke-width="1.9"/>
<rect x="2.2" y="2.2" width="8.5" height="3" fill="#d8e4f0"/>
<path d="M3.5 7.2 H12.5 M3.5 9.9 H12.5 M3.5 12.6 H12.5" stroke="#222" stroke-width="1.2"/></svg>
<div class="t" style="top:341.99px;font-size:11.7px;line-height:13.07px;color:#2d2d2d;font-family:'Liberation Sans',sans-serif;left:44.30px;">Case Label Printing</div>
<div class="a" style="left:12.50px;top:363.69px;width:7.50px;height:1.00px;background:#b4c6dc"></div>
<svg class="a" style="left:26.3px;top:357.50px" width="13.2" height="12.3" viewBox="0 0 16 16" preserveAspectRatio="none"><path d="M0.3 8.5 L4 5.5 L10 1.5 L15.7 4.8 L11 8.6 L8.2 9.6 L7.2 15.7 L5 15.2 L5.6 9.6 L2 11 Z" fill="#383838"/>
<path d="M8.8 3.2 L12.6 0.5 L15.7 4.5 L11.4 7.4 Z" fill="#c8c8b0" stroke="#666" stroke-width="0.5"/></svg>
<div class="t" style="top:357.31px;font-size:11.7px;line-height:13.07px;color:#2d2d2d;font-family:'Liberation Sans',sans-serif;left:44.30px;">Finished Goods Label</div>
<div class="a" style="left:12.50px;top:379.01px;width:7.50px;height:1.00px;background:#b4c6dc"></div>
<svg class="a" style="left:26.3px;top:373.51px" width="13.2" height="11.3" viewBox="0 0 16 16" preserveAspectRatio="none"><path d="M0.3 8.5 L3.2 6.2 L6.3 9.8 L14 0.3 L15.7 1.8 L6.6 15.7 Z" fill="#22e022"/>
<path d="M14 0.3 L15.7 1.8 L6.6 15.7 L5.8 14.2 Z" fill="#0b600b"/></svg>
<div class="t" style="top:372.62px;font-size:11.7px;line-height:13.07px;color:#2d2d2d;font-family:'Liberation Sans',sans-serif;left:44.30px;">Pallet Completion</div>
<div class="a" style="left:12.50px;top:394.32px;width:7.50px;height:1.00px;background:#b4c6dc"></div>
<svg class="a" style="left:27.3px;top:387.72px" width="12.2" height="12.2" viewBox="0 0 16 16" preserveAspectRatio="none"><rect x="1.2" y="0.3" width="13.6" height="3.2" fill="#0f3f90"/>
<path d="M1.5 3.5 H14.5 V13 H1.5Z" fill="#a4d0f4"/>
<path d="M3.2 11.5 V7.5 Q3.2 5 8 5 Q12.8 5 12.8 7.5 V11.5" fill="none" stroke="#102040" stroke-width="1.4"/>
<rect x="5.2" y="5.6" width="5.6" height="1.8" fill="#5070a0"/>
<path d="M1.2 9.5 Q0.3 13 2 13.2 M14.8 9.5 Q15.7 13 14 13.2" stroke="#102040" stroke-width="1.1" fill="none"/>
<rect x="1.3" y="12.8" width="4" height="2.9" fill="#000"/><rect x="10.7" y="12.8" width="4" height="2.9" fill="#000"/></svg>
<div class="t" style="top:387.94px;font-size:11.7px;line-height:13.07px;color:#2d2d2d;font-family:'Liberation Sans',sans-serif;left:44.30px;">Despatch</div>
<div class="a" style="left:12.50px;top:409.64px;width:7.50px;height:1.00px;background:#b4c6dc"></div>
<svg class="a" style="left:26.3px;top:403.74px" width="11.3" height="14.1" viewBox="0 0 16 16" preserveAspectRatio="none"><path d="M2 0.5 H6.8 V6 H9.8 V0.5 H14.5 V15.5 H9.8 V9.8 H6.8 V15.5 H2 Z" fill="#6ff0f8"/>
<path d="M0.5 0.5 H5.5 V6 H8.5 V0.5 H13.5 V15.5 H8.5 V9.8 H5.5 V15.5 H0.5 Z" fill="#e01818" stroke="#801010" stroke-width="0.6"/></svg>
<div class="t" style="top:403.25px;font-size:11.7px;line-height:13.07px;color:#2d2d2d;font-family:'Liberation Sans',sans-serif;left:44.30px;">Pallet History</div>
<div class="a" style="left:12.50px;top:424.96px;width:7.50px;height:1.00px;background:#b4c6dc"></div>
<svg class="a" style="left:26.3px;top:420.46px" width="11.3" height="10.4" viewBox="0 0 16 16" preserveAspectRatio="none"><path d="M0.8 4.5 L4 0.8 H15.2 V12 L12 15.2 H0.8 Z" fill="#444" stroke="#111" stroke-width="1"/>
<path d="M1.5 4.8 L4.3 1.5 H14.4 L11.6 4.8 Z" fill="#e8e8e8"/>
<rect x="1.6" y="5.4" width="9.8" height="9.2" fill="#f0ee20"/>
<path d="M1.6 8.5 H11.4 M1.6 11.6 H11.4" stroke="#111" stroke-width="1.3"/>
<path d="M12.2 5.4 L14.5 2.5 V11.5 L12.2 14.2Z" fill="#777"/></svg>
<div class="t" style="top:418.57px;font-size:11.7px;line-height:13.07px;color:#2d2d2d;font-family:'Liberation Sans',sans-serif;left:44.30px;">Pallet Info</div>
<div class="a" style="left:12.50px;top:440.27px;width:7.50px;height:1.00px;background:#b4c6dc"></div>
<svg class="a" style="left:24.8px;top:436.47px" width="15.6" height="10.4" viewBox="0 0 16 16" preserveAspectRatio="none"><path d="M4 0.5 H11.5 L12.5 5 H3.5Z" fill="#fff" stroke="#333" stroke-width="1"/>
<path d="M0.5 5.5 H15.5 V13.5 L14 15.5 H2 L0.5 13.5Z" fill="#909090" stroke="#222" stroke-width="1"/>
<rect x="2" y="7" width="12" height="2" fill="#d0d0d0"/>
<rect x="3" y="11" width="10" height="2.5" fill="#505050"/></svg>
<div class="t" style="top:433.88px;font-size:11.7px;line-height:13.07px;color:#2d2d2d;font-family:'Liberation Sans',sans-serif;left:44.30px;">Default Printer</div>
<div class="a" style="left:12.50px;top:455.59px;width:7.50px;height:1.00px;background:#b4c6dc"></div>
<svg class="a" style="left:26.3px;top:451.49px" width="12.3" height="10.5" viewBox="0 0 16 16" preserveAspectRatio="none"><path d="M0.5 6 L9 1.5 L15.5 9.5 L7 15 Z" fill="#f0c020" stroke="#806000" stroke-width="1"/>
<path d="M3 6 L9 3 L13 9 L7 12Z" fill="#c8a060"/>
<path d="M1 1 L5 5" stroke="#5a8a30" stroke-width="1.8"/>
<path d="M5 13 L9 15.5" stroke="#a040a0" stroke-width="1.8"/></svg>
<div class="t" style="top:449.20px;font-size:11.7px;line-height:13.07px;color:#2d2d2d;font-family:'Liberation Sans',sans-serif;left:44.30px;">User Reports</div><div class="a" style="left:264.20px;top:122.70px;width:969.50px;height:608.80px;background:#5a7fc2;border-radius:2px"></div>
<div class="a" style="left:268.20px;top:126.80px;width:961.50px;height:600.80px;background:#f4f7fb"></div>
<div class="a" style="left:268.80px;top:127.30px;width:960.50px;height:20.00px;background:linear-gradient(#e4eefa 0%,#f8fbff 30%,#e6f0fb 60%,#b6d0ee 100%)"></div>
<div class="a" style="left:268.80px;top:147.00px;width:960.50px;height:1.30px;background:#7c9cc8"></div>
<div class="a" style="left:268.80px;top:148.30px;width:960.50px;height:579.00px;background:#efefef"></div>
<svg class="a" style="left:274.00px;top:130.00px" width="15.00" height="15.30" viewBox="0 0 16 16"><path d="M4.5 3 H2.5 Q1 3 1 4.5 V11.5 Q1 13.3 2.8 13.3 H4.5" stroke="#e03838" stroke-width="1.9" fill="none"/>
<path d="M11.5 3 H13.5 Q15 3 15 4.5 V11.5 Q15 13.3 13.2 13.3 H11.5" stroke="#3838e0" stroke-width="1.9" fill="none"/>
<rect x="5.2" y="0.3" width="5.6" height="5.2" fill="#353535"/><rect x="6.2" y="1.3" width="3.6" height="2.4" fill="#78c8c8"/>
<path d="M4.2 5.5 H12 L11 7.3 H4.5Z" fill="#1e1e1e"/>
<rect x="5.2" y="8.6" width="5.6" height="5.2" fill="#353535"/><rect x="6.2" y="9.6" width="3.6" height="2.4" fill="#78c8c8"/>
<path d="M4.2 13.8 H12 L11 15.7 H4.5Z" fill="#1e1e1e"/></svg>
<div class="t" style="top:131.59px;font-size:11.5px;line-height:12.85px;color:#242424;font-family:'Liberation Sans',sans-serif;font-weight:bold;letter-spacing:0.37px;left:293.60px;">Interface Log</div>
<svg class="a" style="left:376.00px;top:131.00px" width="804.00" height="15.20" viewBox="0 0 804 15.2"><defs><pattern id="dp2" width="4" height="4" patternUnits="userSpaceOnUse"><rect x="0" y="0" width="1" height="1" fill="#7f8ea8"/><rect x="2" y="2" width="1" height="1" fill="#7f8ea8"/></pattern></defs><rect width="804" height="15.2" fill="url(#dp2)"/></svg>
<svg class="a" style="left:1184.00px;top:128.00px" width="18.00" height="18.00" viewBox="0 0 18 18"><rect x="3" y="8.6" width="5.2" height="5.2" fill="#f4f8ff" stroke="#34405e" stroke-width="1.6"/><path d="M14.8 1.2 L10.2 5.8 M10.2 3.1 V5.8 H12.9" stroke="#000" stroke-width="1.1" fill="none"/></svg>
<svg class="a" style="left:1210.50px;top:129.80px" width="15.00" height="14.00" viewBox="0 0 15 14"><rect x="1" y="1" width="13" height="12" fill="none" stroke="#3c4a66" stroke-width="1.8"/><path d="M3.5 3 L11.5 11 M11.5 3 L3.5 11" stroke="#222" stroke-width="1.1"/></svg>
<div class="t" style="top:165.54px;font-size:10.45px;line-height:11.67px;color:#2a2a2a;font-family:'Liberation Sans',sans-serif;left:-216.60px;width:600px;text-align:right;">Interface Direction</div>
<div class="a" style="left:393.20px;top:160.00px;width:129.60px;height:21.00px;background:#efefef;border:1px solid #8ea3b9;border-bottom-color:#7b91a8;box-shadow:inset 1px 1px 0 #f8fbff"></div><div class="a" style="left:503.30px;top:160.00px;width:19.50px;height:21.00px;background:linear-gradient(#fbfdff,#e2edf8 50%,#bcd3ea);border:1px solid #8ea3b9;border-bottom-color:#7b91a8"></div><svg class="a" style="left:507.90px;top:167.20px" width="10.00" height="6.50" viewBox="0 0 10 6.5"><path d="M0 0 H10 L5 6.5Z" fill="#1e1e1e"/></svg>
<div class="t" style="top:165.54px;font-size:10.45px;line-height:11.67px;color:#2a2a2a;font-family:'Liberation Sans',sans-serif;left:98.80px;width:600px;text-align:right;">Message Status</div>
<div class="a" style="left:705.60px;top:160.00px;width:107.40px;height:21.00px;background:#efefef;border:1px solid #8ea3b9;border-bottom-color:#7b91a8;box-shadow:inset 1px 1px 0 #f8fbff"></div><div class="a" style="left:793.50px;top:160.00px;width:19.50px;height:21.00px;background:linear-gradient(#fbfdff,#e2edf8 50%,#bcd3ea);border:1px solid #8ea3b9;border-bottom-color:#7b91a8"></div><svg class="a" style="left:798.10px;top:167.20px" width="10.00" height="6.50" viewBox="0 0 10 6.5"><path d="M0 0 H10 L5 6.5Z" fill="#1e1e1e"/></svg>
<div class="t" style="top:165.54px;font-size:10.45px;line-height:11.67px;color:#2a2a2a;font-family:'Liberation Sans',sans-serif;left:395.00px;width:600px;text-align:right;">Message Type</div>
<div class="a" style="left:1001.80px;top:160.00px;width:199.60px;height:21.00px;background:#efefef;border:1px solid #8ea3b9;border-bottom-color:#7b91a8;box-shadow:inset 1px 1px 0 #f8fbff"></div><div class="a" style="left:1181.90px;top:160.00px;width:19.50px;height:21.00px;background:linear-gradient(#fbfdff,#e2edf8 50%,#bcd3ea);border:1px solid #8ea3b9;border-bottom-color:#7b91a8"></div><svg class="a" style="left:1186.50px;top:167.20px" width="10.00" height="6.50" viewBox="0 0 10 6.5"><path d="M0 0 H10 L5 6.5Z" fill="#1e1e1e"/></svg>
<div class="t" style="top:194.54px;font-size:10.45px;line-height:11.67px;color:#2a2a2a;font-family:'Liberation Sans',sans-serif;left:-218.40px;width:600px;text-align:right;">Message Reference</div>
<div class="a" style="left:393.40px;top:191.20px;width:201.40px;height:20.00px;background:#fff;border:1px solid #a9a9a9;border-bottom:1.5px solid #7f98b0;border-right-color:#b8b8b8"></div>
<div class="t" style="top:195.54px;font-size:10.45px;line-height:11.67px;color:#2a2a2a;font-family:'Liberation Sans',sans-serif;left:130.60px;width:600px;text-align:right;">Message Information</div>
<div class="a" style="left:739.40px;top:191.20px;width:461.40px;height:20.00px;background:#fff;border:1px solid #a9a9a9;border-bottom:1.5px solid #7f98b0;border-right-color:#b8b8b8"></div>
<div class="t" style="top:222.84px;font-size:10.45px;line-height:11.67px;color:#2a2a2a;font-family:'Liberation Sans',sans-serif;left:-216.60px;width:600px;text-align:right;">Action</div>
<div class="a" style="left:395.20px;top:219.40px;width:129.40px;height:21.00px;background:#efefef;border:1px solid #8ea3b9;border-bottom-color:#7b91a8;box-shadow:inset 1px 1px 0 #f8fbff"></div><div class="a" style="left:505.10px;top:219.40px;width:19.50px;height:21.00px;background:linear-gradient(#fbfdff,#e2edf8 50%,#bcd3ea);border:1px solid #8ea3b9;border-bottom-color:#7b91a8"></div><svg class="a" style="left:509.70px;top:226.60px" width="10.00" height="6.50" viewBox="0 0 10 6.5"><path d="M0 0 H10 L5 6.5Z" fill="#1e1e1e"/></svg>
<div class="t" style="top:222.84px;font-size:10.45px;line-height:11.67px;color:#2a2a2a;font-family:'Liberation Sans',sans-serif;left:131.00px;width:600px;text-align:right;">Result</div>
<div class="a" style="left:739.40px;top:219.60px;width:461.40px;height:20.40px;background:#fff;border:1px solid #a9a9a9;border-bottom:1.5px solid #7f98b0;border-right-color:#b8b8b8"></div>
<div class="t" style="top:257.44px;font-size:10.45px;line-height:11.67px;color:#2a2a2a;font-family:'Liberation Sans',sans-serif;left:-220.20px;width:600px;text-align:right;">Event Date</div>
<div class="a" style="left:390.80px;top:256.60px;width:12.50px;height:12.50px;background:linear-gradient(#fbfdff,#c2d6ec);border:1px solid #7f97b1"></div>
<div class="a" style="left:419.10px;top:249.40px;width:107.40px;height:23.60px;background:#fff;border:1px solid #d2dbe4"></div><div class="t" style="top:255.77px;font-size:10.2px;line-height:11.39px;color:#b5c5d8;font-family:'Liberation Sans',sans-serif;left:421.70px;">17/02/2019 18:14:10</div><div class="a" style="left:526.30px;top:249.40px;width:14.40px;height:11.60px;background:linear-gradient(#fbfbfb,#e6e6e6);border:1px solid #c9c9c9"></div><div class="a" style="left:526.30px;top:260.80px;width:14.40px;height:12.20px;background:linear-gradient(#f4f4f4,#e2e2e2);border:1px solid #c9c9c9"></div><svg class="a" style="left:530.80px;top:253.40px" width="6.00" height="3.50" viewBox="0 0 6 3.5"><path d="M0 3.5 H6 L3 0Z" fill="#bdbdbd"/></svg><svg class="a" style="left:530.80px;top:265.40px" width="6.00" height="3.50" viewBox="0 0 6 3.5"><path d="M0 0 H6 L3 3.5Z" fill="#bdbdbd"/></svg><svg class="a" style="left:541.80px;top:255.00px" width="16.00" height="14.00" viewBox="0 0 16 14"><path d="M1 1 H10 L15 13 H3Z" fill="#d6d6d6" stroke="#bdbdbd" stroke-width="0.8"/><path d="M2 3 H10 M3 6 H12 M4 9 H13" stroke="#c4c4c4" stroke-width="1"/></svg>
<div class="a" style="left:567.40px;top:249.40px;width:107.40px;height:23.60px;background:#fff;border:1px solid #d2dbe4"></div><div class="t" style="top:255.77px;font-size:10.2px;line-height:11.39px;color:#b5c5d8;font-family:'Liberation Sans',sans-serif;left:570.00px;">17/02/2019 19:14:10</div><div class="a" style="left:674.60px;top:249.40px;width:14.40px;height:11.60px;background:linear-gradient(#fbfbfb,#e6e6e6);border:1px solid #c9c9c9"></div><div class="a" style="left:674.60px;top:260.80px;width:14.40px;height:12.20px;background:linear-gradient(#f4f4f4,#e2e2e2);border:1px solid #c9c9c9"></div><svg class="a" style="left:679.10px;top:253.40px" width="6.00" height="3.50" viewBox="0 0 6 3.5"><path d="M0 3.5 H6 L3 0Z" fill="#bdbdbd"/></svg><svg class="a" style="left:679.10px;top:265.40px" width="6.00" height="3.50" viewBox="0 0 6 3.5"><path d="M0 0 H6 L3 3.5Z" fill="#bdbdbd"/></svg><svg class="a" style="left:690.10px;top:255.00px" width="16.00" height="14.00" viewBox="0 0 16 14"><path d="M1 1 H10 L15 13 H3Z" fill="#d6d6d6" stroke="#bdbdbd" stroke-width="0.8"/><path d="M2 3 H10 M3 6 H12 M4 9 H13" stroke="#c4c4c4" stroke-width="1"/></svg>
<div class="t" style="top:257.44px;font-size:10.45px;line-height:11.67px;color:#2a2a2a;font-family:'Liberation Sans',sans-serif;left:491.00px;width:600px;text-align:right;">Limit</div>
<div class="a" style="left:1097.40px;top:255.60px;width:12.50px;height:12.50px;background:linear-gradient(#fbfdff,#c2d6ec);border:1px solid #7f97b1"></div><svg class="a" style="left:1099.90px;top:258.60px" width="8.00" height="8.00" viewBox="0 0 8 8"><path d="M1 4.5 L3 7 L7 1" stroke="#111" stroke-width="1.9" fill="none"/></svg>
<div class="a" style="left:1124.90px;top:252.00px;width:62.80px;height:20.80px;background:#fff;border:1px solid #cdd5de"></div>
<div class="t" style="top:256.54px;font-size:10.45px;line-height:11.67px;color:#222;font-family:'Liberation Sans',sans-serif;left:585.80px;width:600px;text-align:right;">1,000</div>
<div class="a" style="left:1187.40px;top:252.00px;width:13.80px;height:10.60px;background:linear-gradient(#fbfbfb,#e6e6e6);border:1px solid #c9c9c9"></div>
<div class="a" style="left:1187.40px;top:262.40px;width:13.80px;height:10.40px;background:linear-gradient(#f4f4f4,#e2e2e2);border:1px solid #c9c9c9"></div>
<svg class="a" style="left:1192.00px;top:255.50px" width="5.00" height="3.00" viewBox="0 0 5 3"><path d="M0 3 H5 L2.5 0Z" fill="#999"/></svg>
<svg class="a" style="left:1192.00px;top:266.50px" width="5.00" height="3.00" viewBox="0 0 5 3"><path d="M0 0 H5 L2.5 3Z" fill="#999"/></svg>
<div class="a" style="left:272.10px;top:277.40px;width:131.10px;height:30.00px;background:linear-gradient(#fdfeff,#eef4fb 35%,#d5e3f2 70%,#bcd1e8);border:1px solid #8fa8c2;border-bottom:1.5px solid #6f8eb0;border-radius:1px"></div>
<svg class="a" style="left:311.7px;top:285px" width="15.5" height="15" viewBox="0 0 16 16" preserveAspectRatio="none"><path d="M5 0.5 H12 L15.3 3.8 V15.5 H5Z" fill="#fff" stroke="#222" stroke-width="1.1"/>
<path d="M12 0.5 V3.8 H15.3" fill="none" stroke="#222" stroke-width="0.8"/>
<circle cx="5.6" cy="6.2" r="4.9" fill="#28c4c8" stroke="#0a3040" stroke-width="1.1"/>
<circle cx="4.2" cy="4.8" r="1.6" fill="#b8f8f8"/>
<path d="M8.6 9.4 L13.2 14.8" stroke="#1838c8" stroke-width="2.8"/>
<path d="M1.5 15 H6" stroke="#999" stroke-width="1"/></svg>
<div class="t" style="top:286.74px;font-size:10.45px;line-height:11.67px;color:#2a2a2a;font-family:'Liberation Sans',sans-serif;left:330.40px;"><u>S</u>earch</div>
<div class="a" style="left:405.60px;top:277.40px;width:132.00px;height:30.00px;background:linear-gradient(#fdfeff,#eef4fb 35%,#d5e3f2 70%,#bcd1e8);border:1px solid #8fa8c2;border-bottom:1.5px solid #6f8eb0;border-radius:1px"></div>
<svg class="a" style="left:437.2px;top:285px" width="15.6" height="15" viewBox="0 0 16 16" preserveAspectRatio="none"><path d="M0.8 0.8 L6 6" stroke="#9a5a18" stroke-width="3.2" stroke-linecap="round"/>
<path d="M4.6 5.2 L7.6 8.2" stroke="#d87a10" stroke-width="2.6"/>
<path d="M6.5 7 L9.5 4.6 L15.5 10.8 L11.2 15.5 Z" fill="#f4d820" stroke="#b09010" stroke-width="0.9"/>
<path d="M9 8 L12.5 12 M11 6.5 L14 10" stroke="#d8b010" stroke-width="0.7"/></svg>
<div class="t" style="top:286.74px;font-size:10.45px;line-height:11.67px;color:#2a2a2a;font-family:'Liberation Sans',sans-serif;left:456.00px;">Clear <u>F</u>ilter</div>
<div class="a" style="left:539.50px;top:277.40px;width:131.50px;height:30.00px;background:linear-gradient(#fdfeff,#eef4fb 35%,#d5e3f2 70%,#bcd1e8);border:1px solid #8fa8c2;border-bottom:1.5px solid #6f8eb0;border-radius:1px"></div>
<svg class="a" style="left:573.7px;top:285px" width="15.6" height="15" viewBox="0 0 16 16" preserveAspectRatio="none"><path d="M5 0.6 H11 L15.4 5 V11 L11 15.4 H5 L0.6 11 V5Z" fill="#10c010" stroke="#053a05" stroke-width="1.2"/>
<circle cx="7" cy="6" r="3.5" fill="#50f050" opacity="0.6"/></svg>
<div class="t" style="top:286.74px;font-size:10.45px;line-height:11.67px;color:#2a2a2a;font-family:'Liberation Sans',sans-serif;left:592.10px;"><u>R</u>esubmit</div>
<div class="a" style="left:673.30px;top:277.40px;width:131.90px;height:30.00px;background:linear-gradient(#fdfeff,#eef4fb 35%,#d5e3f2 70%,#bcd1e8);border:1px solid #8fa8c2;border-bottom:1.5px solid #6f8eb0;border-radius:1px"></div>
<svg class="a" style="left:716.7px;top:285px" width="15.6" height="15" viewBox="0 0 16 16" preserveAspectRatio="none"><rect x="0.6" y="0.6" width="14.8" height="14.8" fill="#f0f4f0" stroke="#707070" stroke-width="1.2"/>
<rect x="2.6" y="2.6" width="10.8" height="10.8" fill="#c8ecc8" stroke="#4a9a4a" stroke-width="0.8"/>
<path d="M4.2 4.2 L11.8 11.8 M11.8 4.2 L4.2 11.8" stroke="#10901a" stroke-width="2.2"/></svg>
<div class="t" style="top:286.74px;font-size:10.45px;line-height:11.67px;color:#2a2a2a;font-family:'Liberation Sans',sans-serif;left:735.80px;">E<u>x</u>cel</div>
<div class="a" style="left:807.60px;top:277.40px;width:131.80px;height:30.00px;background:linear-gradient(#fdfeff,#eef4fb 35%,#d5e3f2 70%,#bcd1e8);border:1px solid #8fa8c2;border-bottom:1.5px solid #6f8eb0;border-radius:1px"></div>
<div class="a" style="left:850.50px;top:291.40px;width:13.00px;height:2.40px;background:#e01a1a"></div>
<div class="t" style="top:286.74px;font-size:10.45px;line-height:11.67px;color:#2a2a2a;font-family:'Liberation Sans',sans-serif;left:868.10px;"><u>D</u>elete</div>
<div class="a" style="left:941.10px;top:277.40px;width:131.80px;height:30.00px;background:linear-gradient(#fdfeff,#eef4fb 35%,#d5e3f2 70%,#bcd1e8);border:1px solid #8fa8c2;border-bottom:1.5px solid #6f8eb0;border-radius:1px"></div>
<div class="a" style="left:980.70px;top:291.40px;width:13.00px;height:2.40px;background:#e01a1a"></div>
<div class="t" style="top:286.74px;font-size:10.45px;line-height:11.67px;color:#2a2a2a;font-family:'Liberation Sans',sans-serif;left:998.30px;"><u>A</u>rchive</div>
<div class="a" style="left:1074.60px;top:277.40px;width:132.50px;height:30.00px;background:linear-gradient(#fdfeff,#eef4fb 35%,#d5e3f2 70%,#bcd1e8);border:1px solid #8fa8c2;border-bottom:1.5px solid #6f8eb0;border-radius:1px"></div>
<svg class="a" style="left:1120.2px;top:287px" width="10.4" height="11.4" viewBox="0 0 16 16" preserveAspectRatio="none"><rect x="0.3" y="0.3" width="11.5" height="15.4" fill="#e00808"/>
<path d="M11.8 1 L15.2 3.5 L12.8 8 L15.2 12.5 L11.8 15" stroke="#111" stroke-width="1.8" fill="none"/>
<rect x="2.5" y="7.2" width="3" height="1.6" fill="#700"/></svg>
<div class="t" style="top:286.74px;font-size:10.45px;line-height:11.67px;color:#2a2a2a;font-family:'Liberation Sans',sans-serif;left:1136.30px;"><u>C</u>lose</div><div class="a" style="left:270.40px;top:313.00px;width:937.40px;height:274.80px;background:#ececec;border:1px solid #b9b9b9"></div>
<div class="a" style="left:271.00px;top:313.90px;width:921.90px;height:22.70px;background:#0a7bc6;border-bottom:1px solid #06609e"></div>
<div class="t" style="top:319.94px;font-size:10.45px;line-height:11.67px;color:#f4fbff;font-family:'Liberation Sans',sans-serif;left:-0.30px;width:600px;text-align:center;">Log ID</div>
<div class="a" style="left:326.80px;top:313.90px;width:1.20px;height:22.70px;background:#3a9ad8"></div>
<div class="t" style="top:319.94px;font-size:10.45px;line-height:11.67px;color:#f4fbff;font-family:'Liberation Sans',sans-serif;left:84.85px;width:600px;text-align:center;">Event Time</div>
<div class="a" style="left:440.70px;top:313.90px;width:1.20px;height:22.70px;background:#3a9ad8"></div>
<div class="t" style="top:319.94px;font-size:10.45px;line-height:11.67px;color:#f4fbff;font-family:'Liberation Sans',sans-serif;left:232.80px;width:600px;text-align:center;">Interface Type</div>
<div class="a" style="left:622.70px;top:313.90px;width:1.20px;height:22.70px;background:#3a9ad8"></div>
<div class="t" style="top:319.94px;font-size:10.45px;line-height:11.67px;color:#f4fbff;font-family:'Liberation Sans',sans-serif;left:400.15px;width:600px;text-align:center;">Message Ref</div>
<div class="a" style="left:775.40px;top:313.90px;width:1.20px;height:22.70px;background:#3a9ad8"></div>
<div class="t" style="top:319.94px;font-size:10.45px;line-height:11.67px;color:#f4fbff;font-family:'Liberation Sans',sans-serif;left:562.85px;width:600px;text-align:center;">Message Info</div>
<div class="a" style="left:948.10px;top:313.90px;width:1.20px;height:22.70px;background:#3a9ad8"></div>
<div class="t" style="top:319.94px;font-size:10.45px;line-height:11.67px;color:#f4fbff;font-family:'Liberation Sans',sans-serif;left:677.50px;width:600px;text-align:center;">Direction</div>
<div class="a" style="left:1004.70px;top:313.90px;width:1.20px;height:22.70px;background:#3a9ad8"></div>
<div class="t" style="top:319.94px;font-size:10.45px;line-height:11.67px;color:#f4fbff;font-family:'Liberation Sans',sans-serif;left:763.25px;width:600px;text-align:center;">Action</div>
<div class="a" style="left:1119.60px;top:313.90px;width:1.20px;height:22.70px;background:#3a9ad8"></div>
<div class="t" style="top:319.94px;font-size:10.45px;line-height:11.67px;color:#f4fbff;font-family:'Liberation Sans',sans-serif;left:854.20px;width:600px;text-align:center;">Status</div>
<div class="a" style="left:1186.60px;top:313.90px;width:1.20px;height:22.70px;background:#3a9ad8"></div>
<div class="a" style="left:0;top:336.9px;width:1442px;height:236.5px;overflow:hidden"><div class="a" style="left:0;top:-336.9px;width:1442px;height:1063px"><div class="a" style="left:271.00px;top:336.90px;width:921.90px;height:15.23px;background:#ffe0e0;border-bottom:1px solid #b5b5b5"></div>
<div class="t" style="top:339.57px;font-size:11.2px;line-height:12.69px;color:#2b25c9;font-family:'Liberation Mono',monospace;left:-273.80px;width:600px;text-align:right;transform:scaleY(1.07);transform-origin:0 73.5%;-webkit-text-stroke:0.12px;">3997472</div>
<div class="a" style="left:326.90px;top:336.90px;width:1.00px;height:15.23px;background:#9a9a9a"></div>
<div class="t" style="top:339.57px;font-size:11.2px;line-height:12.69px;color:#2b25c9;font-family:'Liberation Mono',monospace;left:329.00px;transform:scaleY(1.07);transform-origin:0 73.5%;-webkit-text-stroke:0.12px;">2018-07-17 16:37</div>
<div class="a" style="left:440.80px;top:336.90px;width:1.00px;height:15.23px;background:#9a9a9a"></div>
<div class="t" style="top:339.57px;font-size:11.2px;line-height:12.69px;color:#2b25c9;font-family:'Liberation Mono',monospace;left:442.90px;transform:scaleY(1.07);transform-origin:0 73.5%;-webkit-text-stroke:0.12px;">Pallet Status Change</div>
<div class="a" style="left:622.80px;top:336.90px;width:1.00px;height:15.23px;background:#9a9a9a"></div>
<div class="t" style="top:339.57px;font-size:11.2px;line-height:12.69px;color:#2b25c9;font-family:'Liberation Mono',monospace;left:624.90px;transform:scaleY(1.07);transform-origin:0 73.5%;-webkit-text-stroke:0.12px;">0000000553516254</div>
<div class="a" style="left:775.50px;top:336.90px;width:1.00px;height:15.23px;background:#9a9a9a"></div>
<div class="t" style="top:339.57px;font-size:11.2px;line-height:12.69px;color:#2b25c9;font-family:'Liberation Mono',monospace;left:777.60px;transform:scaleY(1.07);transform-origin:0 73.5%;-webkit-text-stroke:0.12px;">Order Number=0015699263</div>
<div class="a" style="left:948.20px;top:336.90px;width:1.00px;height:15.23px;background:#9a9a9a"></div>
<div class="t" style="top:339.57px;font-size:11.2px;line-height:12.69px;color:#2b25c9;font-family:'Liberation Mono',monospace;left:950.30px;transform:scaleY(1.07);transform-origin:0 73.5%;-webkit-text-stroke:0.12px;">Input</div>
<div class="a" style="left:1004.80px;top:336.90px;width:1.00px;height:15.23px;background:#9a9a9a"></div>
<div class="t" style="top:339.57px;font-size:11.2px;line-height:12.69px;color:#2b25c9;font-family:'Liberation Mono',monospace;left:1006.90px;transform:scaleY(1.07);transform-origin:0 73.5%;-webkit-text-stroke:0.12px;">DB Update</div>
<div class="a" style="left:1119.70px;top:336.90px;width:1.00px;height:15.23px;background:#9a9a9a"></div>
<div class="t" style="top:339.57px;font-size:11.2px;line-height:12.69px;color:#2b25c9;font-family:'Liberation Mono',monospace;left:1121.80px;transform:scaleY(1.07);transform-origin:0 73.5%;-webkit-text-stroke:0.12px;">Error</div>
<div class="a" style="left:1186.70px;top:336.90px;width:1.00px;height:15.23px;background:#9a9a9a"></div>
<div class="t" style="top:339.57px;font-size:11.2px;line-height:12.69px;color:#2b25c9;font-family:'Liberation Mono',monospace;left:1188.80px;transform:scaleY(1.07);transform-origin:0 73.5%;-webkit-text-stroke:0.12px;">u</div>
<div class="a" style="left:271.00px;top:352.13px;width:921.90px;height:15.23px;background:#effff0;border-bottom:1px solid #b5b5b5"></div>
<div class="t" style="top:354.80px;font-size:11.2px;line-height:12.69px;color:#2b25c9;font-family:'Liberation Mono',monospace;left:-273.80px;width:600px;text-align:right;transform:scaleY(1.07);transform-origin:0 73.5%;-webkit-text-stroke:0.12px;">3997471</div>
<div class="a" style="left:326.90px;top:352.13px;width:1.00px;height:15.23px;background:#9a9a9a"></div>
<div class="t" style="top:354.80px;font-size:11.2px;line-height:12.69px;color:#2b25c9;font-family:'Liberation Mono',monospace;left:329.00px;transform:scaleY(1.07);transform-origin:0 73.5%;-webkit-text-stroke:0.12px;">2018-07-17 16:36</div>
<div class="a" style="left:440.80px;top:352.13px;width:1.00px;height:15.23px;background:#9a9a9a"></div>
<div class="t" style="top:354.80px;font-size:11.2px;line-height:12.69px;color:#2b25c9;font-family:'Liberation Mono',monospace;left:442.90px;transform:scaleY(1.07);transform-origin:0 73.5%;-webkit-text-stroke:0.12px;">Process Order</div>
<div class="a" style="left:622.80px;top:352.13px;width:1.00px;height:15.23px;background:#9a9a9a"></div>
<div class="t" style="top:354.80px;font-size:11.2px;line-height:12.69px;color:#2b25c9;font-family:'Liberation Mono',monospace;left:624.90px;transform:scaleY(1.07);transform-origin:0 73.5%;-webkit-text-stroke:0.12px;">CR 20180717153630</div>
<div class="a" style="left:775.50px;top:352.13px;width:1.00px;height:15.23px;background:#9a9a9a"></div>
<div class="t" style="top:354.80px;font-size:11.2px;line-height:12.69px;color:#2b25c9;font-family:'Liberation Mono',monospace;left:777.60px;transform:scaleY(1.07);transform-origin:0 73.5%;-webkit-text-stroke:0.12px;">Process Order=23107981</div>
<div class="a" style="left:948.20px;top:352.13px;width:1.00px;height:15.23px;background:#9a9a9a"></div>
<div class="t" style="top:354.80px;font-size:11.2px;line-height:12.69px;color:#2b25c9;font-family:'Liberation Mono',monospace;left:950.30px;transform:scaleY(1.07);transform-origin:0 73.5%;-webkit-text-stroke:0.12px;">Input</div>
<div class="a" style="left:1004.80px;top:352.13px;width:1.00px;height:15.23px;background:#9a9a9a"></div>
<div class="t" style="top:354.80px;font-size:11.2px;line-height:12.69px;color:#2b25c9;font-family:'Liberation Mono',monospace;left:1006.90px;transform:scaleY(1.07);transform-origin:0 73.5%;-webkit-text-stroke:0.12px;">DB Update</div>
<div class="a" style="left:1119.70px;top:352.13px;width:1.00px;height:15.23px;background:#9a9a9a"></div>
<div class="t" style="top:354.80px;font-size:11.2px;line-height:12.69px;color:#2b25c9;font-family:'Liberation Mono',monospace;left:1121.80px;transform:scaleY(1.07);transform-origin:0 73.5%;-webkit-text-stroke:0.12px;">Success</div>
<div class="a" style="left:1186.70px;top:352.13px;width:1.00px;height:15.23px;background:#9a9a9a"></div>
<div class="t" style="top:354.80px;font-size:11.2px;line-height:12.69px;color:#2b25c9;font-family:'Liberation Mono',monospace;left:1188.80px;transform:scaleY(1.07);transform-origin:0 73.5%;-webkit-text-stroke:0.12px;">u</div>
<div class="a" style="left:271.00px;top:367.36px;width:921.90px;height:15.23px;background:#ffe0e0;border-bottom:1px solid #b5b5b5"></div>
<div class="t" style="top:370.03px;font-size:11.2px;line-height:12.69px;color:#2b25c9;font-family:'Liberation Mono',monospace;left:-273.80px;width:600px;text-align:right;transform:scaleY(1.07);transform-origin:0 73.5%;-webkit-text-stroke:0.12px;">3997470</div>
<div class="a" style="left:326.90px;top:367.36px;width:1.00px;height:15.23px;background:#9a9a9a"></div>
<div class="t" style="top:370.03px;font-size:11.2px;line-height:12.69px;color:#2b25c9;font-family:'Liberation Mono',monospace;left:329.00px;transform:scaleY(1.07);transform-origin:0 73.5%;-webkit-text-stroke:0.12px;">2018-07-17 16:35</div>
<div class="a" style="left:440.80px;top:367.36px;width:1.00px;height:15.23px;background:#9a9a9a"></div>
<div class="t" style="top:370.03px;font-size:11.2px;line-height:12.69px;color:#2b25c9;font-family:'Liberation Mono',monospace;left:442.90px;transform:scaleY(1.07);transform-origin:0 73.5%;-webkit-text-stroke:0.12px;">Pallet Status Change</div>
<div class="a" style="left:622.80px;top:367.36px;width:1.00px;height:15.23px;background:#9a9a9a"></div>
<div class="t" style="top:370.03px;font-size:11.2px;line-height:12.69px;color:#2b25c9;font-family:'Liberation Mono',monospace;left:624.90px;transform:scaleY(1.07);transform-origin:0 73.5%;-webkit-text-stroke:0.12px;">0000000553498299</div>
<div class="a" style="left:775.50px;top:367.36px;width:1.00px;height:15.23px;background:#9a9a9a"></div>
<div class="t" style="top:370.03px;font-size:11.2px;line-height:12.69px;color:#2b25c9;font-family:'Liberation Mono',monospace;left:777.60px;transform:scaleY(1.07);transform-origin:0 73.5%;-webkit-text-stroke:0.12px;">Order Number=0015698470</div>
<div class="a" style="left:948.20px;top:367.36px;width:1.00px;height:15.23px;background:#9a9a9a"></div>
<div class="t" style="top:370.03px;font-size:11.2px;line-height:12.69px;color:#2b25c9;font-family:'Liberation Mono',monospace;left:950.30px;transform:scaleY(1.07);transform-origin:0 73.5%;-webkit-text-stroke:0.12px;">Input</div>
<div class="a" style="left:1004.80px;top:367.36px;width:1.00px;height:15.23px;background:#9a9a9a"></div>
<div class="t" style="top:370.03px;font-size:11.2px;line-height:12.69px;color:#2b25c9;font-family:'Liberation Mono',monospace;left:1006.90px;transform:scaleY(1.07);transform-origin:0 73.5%;-webkit-text-stroke:0.12px;">DB Update</div>
<div class="a" style="left:1119.70px;top:367.36px;width:1.00px;height:15.23px;background:#9a9a9a"></div>
<div class="t" style="top:370.03px;font-size:11.2px;line-height:12.69px;color:#2b25c9;font-family:'Liberation Mono',monospace;left:1121.80px;transform:scaleY(1.07);transform-origin:0 73.5%;-webkit-text-stroke:0.12px;">Error</div>
<div class="a" style="left:1186.70px;top:367.36px;width:1.00px;height:15.23px;background:#9a9a9a"></div>
<div class="t" style="top:370.03px;font-size:11.2px;line-height:12.69px;color:#2b25c9;font-family:'Liberation Mono',monospace;left:1188.80px;transform:scaleY(1.07);transform-origin:0 73.5%;-webkit-text-stroke:0.12px;">u</div>
<div class="a" style="left:271.00px;top:382.59px;width:921.90px;height:15.23px;background:#effff0;border-bottom:1px solid #b5b5b5"></div>
<div class="t" style="top:385.26px;font-size:11.2px;line-height:12.69px;color:#2b25c9;font-family:'Liberation Mono',monospace;left:-273.80px;width:600px;text-align:right;transform:scaleY(1.07);transform-origin:0 73.5%;-webkit-text-stroke:0.12px;">3997469</div>
<div class="a" style="left:326.90px;top:382.59px;width:1.00px;height:15.23px;background:#9a9a9a"></div>
<div class="t" style="top:385.26px;font-size:11.2px;line-height:12.69px;color:#2b25c9;font-family:'Liberation Mono',monospace;left:329.00px;transform:scaleY(1.07);transform-origin:0 73.5%;-webkit-text-stroke:0.12px;">2018-07-17 16:35</div>
<div class="a" style="left:440.80px;top:382.59px;width:1.00px;height:15.23px;background:#9a9a9a"></div>
<div class="t" style="top:385.26px;font-size:11.2px;line-height:12.69px;color:#2b25c9;font-family:'Liberation Mono',monospace;left:442.90px;transform:scaleY(1.07);transform-origin:0 73.5%;-webkit-text-stroke:0.12px;">Pallet Status Change</div>
<div class="a" style="left:622.80px;top:382.59px;width:1.00px;height:15.23px;background:#9a9a9a"></div>
<div class="t" style="top:385.26px;font-size:11.2px;line-height:12.69px;color:#2b25c9;font-family:'Liberation Mono',monospace;left:624.90px;transform:scaleY(1.07);transform-origin:0 73.5%;-webkit-text-stroke:0.12px;">0000000553506366</div>
<div class="a" style="left:775.50px;top:382.59px;width:1.00px;height:15.23px;background:#9a9a9a"></div>
<div class="t" style="top:385.26px;font-size:11.2px;line-height:12.69px;color:#2b25c9;font-family:'Liberation Mono',monospace;left:777.60px;transform:scaleY(1.07);transform-origin:0 73.5%;-webkit-text-stroke:0.12px;">Order Number=0015698469</div>
<div class="a" style="left:948.20px;top:382.59px;width:1.00px;height:15.23px;background:#9a9a9a"></div>
<div class="t" style="top:385.26px;font-size:11.2px;line-height:12.69px;color:#2b25c9;font-family:'Liberation Mono',monospace;left:950.30px;transform:scaleY(1.07);transform-origin:0 73.5%;-webkit-text-stroke:0.12px;">Input</div>
<div class="a" style="left:1004.80px;top:382.59px;width:1.00px;height:15.23px;background:#9a9a9a"></div>
<div class="t" style="top:385.26px;font-size:11.2px;line-height:12.69px;color:#2b25c9;font-family:'Liberation Mono',monospace;left:1006.90px;transform:scaleY(1.07);transform-origin:0 73.5%;-webkit-text-stroke:0.12px;">DB Update</div>
<div class="a" style="left:1119.70px;top:382.59px;width:1.00px;height:15.23px;background:#9a9a9a"></div>
<div class="t" style="top:385.26px;font-size:11.2px;line-height:12.69px;color:#2b25c9;font-family:'Liberation Mono',monospace;left:1121.80px;transform:scaleY(1.07);transform-origin:0 73.5%;-webkit-text-stroke:0.12px;">Error</div>
<div class="a" style="left:1186.70px;top:382.59px;width:1.00px;height:15.23px;background:#9a9a9a"></div>
<div class="t" style="top:385.26px;font-size:11.2px;line-height:12.69px;color:#2b25c9;font-family:'Liberation Mono',monospace;left:1188.80px;transform:scaleY(1.07);transform-origin:0 73.5%;-webkit-text-stroke:0.12px;">u</div>
<div class="a" style="left:271.00px;top:397.82px;width:921.90px;height:15.23px;background:#ffe0e0;border-bottom:1px solid #b5b5b5"></div>
<div class="t" style="top:400.49px;font-size:11.2px;line-height:12.69px;color:#2b25c9;font-family:'Liberation Mono',monospace;left:-273.80px;width:600px;text-align:right;transform:scaleY(1.07);transform-origin:0 73.5%;-webkit-text-stroke:0.12px;">3997468</div>
<div class="a" style="left:326.90px;top:397.82px;width:1.00px;height:15.23px;background:#9a9a9a"></div>
<div class="t" style="top:400.49px;font-size:11.2px;line-height:12.69px;color:#2b25c9;font-family:'Liberation Mono',monospace;left:329.00px;transform:scaleY(1.07);transform-origin:0 73.5%;-webkit-text-stroke:0.12px;">2018-07-17 16:34</div>
<div class="a" style="left:440.80px;top:397.82px;width:1.00px;height:15.23px;background:#9a9a9a"></div>
<div class="t" style="top:400.49px;font-size:11.2px;line-height:12.69px;color:#2b25c9;font-family:'Liberation Mono',monospace;left:442.90px;transform:scaleY(1.07);transform-origin:0 73.5%;-webkit-text-stroke:0.12px;">Pallet Status Change</div>
<div class="a" style="left:622.80px;top:397.82px;width:1.00px;height:15.23px;background:#9a9a9a"></div>
<div class="t" style="top:400.49px;font-size:11.2px;line-height:12.69px;color:#2b25c9;font-family:'Liberation Mono',monospace;left:624.90px;transform:scaleY(1.07);transform-origin:0 73.5%;-webkit-text-stroke:0.12px;">0000000553511325</div>
<div class="a" style="left:775.50px;top:397.82px;width:1.00px;height:15.23px;background:#9a9a9a"></div>
<div class="t" style="top:400.49px;font-size:11.2px;line-height:12.69px;color:#2b25c9;font-family:'Liberation Mono',monospace;left:777.60px;transform:scaleY(1.07);transform-origin:0 73.5%;-webkit-text-stroke:0.12px;">Order Number=0015698468</div>
<div class="a" style="left:948.20px;top:397.82px;width:1.00px;height:15.23px;background:#9a9a9a"></div>
<div class="t" style="top:400.49px;font-size:11.2px;line-height:12.69px;color:#2b25c9;font-family:'Liberation Mono',monospace;left:950.30px;transform:scaleY(1.07);transform-origin:0 73.5%;-webkit-text-stroke:0.12px;">Input</div>
<div class="a" style="left:1004.80px;top:397.82px;width:1.00px;height:15.23px;background:#9a9a9a"></div>
<div class="t" style="top:400.49px;font-size:11.2px;line-height:12.69px;color:#2b25c9;font-family:'Liberation Mono',monospace;left:1006.90px;transform:scaleY(1.07);transform-origin:0 73.5%;-webkit-text-stroke:0.12px;">DB Update</div>
<div class="a" style="left:1119.70px;top:397.82px;width:1.00px;height:15.23px;background:#9a9a9a"></div>
<div class="t" style="top:400.49px;font-size:11.2px;line-height:12.69px;color:#2b25c9;font-family:'Liberation Mono',monospace;left:1121.80px;transform:scaleY(1.07);transform-origin:0 73.5%;-webkit-text-stroke:0.12px;">Error</div>
<div class="a" style="left:1186.70px;top:397.82px;width:1.00px;height:15.23px;background:#9a9a9a"></div>
<div class="t" style="top:400.49px;font-size:11.2px;line-height:12.69px;color:#2b25c9;font-family:'Liberation Mono',monospace;left:1188.80px;transform:scaleY(1.07);transform-origin:0 73.5%;-webkit-text-stroke:0.12px;">u</div>
<div class="a" style="left:271.00px;top:413.05px;width:921.90px;height:15.23px;background:#effff0;border-bottom:1px solid #b5b5b5"></div>
<div class="t" style="top:415.72px;font-size:11.2px;line-height:12.69px;color:#2b25c9;font-family:'Liberation Mono',monospace;left:-273.80px;width:600px;text-align:right;transform:scaleY(1.07);transform-origin:0 73.5%;-webkit-text-stroke:0.12px;">3997467</div>
<div class="a" style="left:326.90px;top:413.05px;width:1.00px;height:15.23px;background:#9a9a9a"></div>
<div class="t" style="top:415.72px;font-size:11.2px;line-height:12.69px;color:#2b25c9;font-family:'Liberation Mono',monospace;left:329.00px;transform:scaleY(1.07);transform-origin:0 73.5%;-webkit-text-stroke:0.12px;">2018-07-17 16:34</div>
<div class="a" style="left:440.80px;top:413.05px;width:1.00px;height:15.23px;background:#9a9a9a"></div>
<div class="t" style="top:415.72px;font-size:11.2px;line-height:12.69px;color:#2b25c9;font-family:'Liberation Mono',monospace;left:442.90px;transform:scaleY(1.07);transform-origin:0 73.5%;-webkit-text-stroke:0.12px;">Pallet Status Change</div>
<div class="a" style="left:622.80px;top:413.05px;width:1.00px;height:15.23px;background:#9a9a9a"></div>
<div class="t" style="top:415.72px;font-size:11.2px;line-height:12.69px;color:#2b25c9;font-family:'Liberation Mono',monospace;left:624.90px;transform:scaleY(1.07);transform-origin:0 73.5%;-webkit-text-stroke:0.12px;">0000000553456899</div>
<div class="a" style="left:775.50px;top:413.05px;width:1.00px;height:15.23px;background:#9a9a9a"></div>
<div class="t" style="top:415.72px;font-size:11.2px;line-height:12.69px;color:#2b25c9;font-family:'Liberation Mono',monospace;left:777.60px;transform:scaleY(1.07);transform-origin:0 73.5%;-webkit-text-stroke:0.12px;">Order Number=0015698463</div>
<div class="a" style="left:948.20px;top:413.05px;width:1.00px;height:15.23px;background:#9a9a9a"></div>
<div class="t" style="top:415.72px;font-size:11.2px;line-height:12.69px;color:#2b25c9;font-family:'Liberation Mono',monospace;left:950.30px;transform:scaleY(1.07);transform-origin:0 73.5%;-webkit-text-stroke:0.12px;">Input</div>
<div class="a" style="left:1004.80px;top:413.05px;width:1.00px;height:15.23px;background:#9a9a9a"></div>
<div class="t" style="top:415.72px;font-size:11.2px;line-height:12.69px;color:#2b25c9;font-family:'Liberation Mono',monospace;left:1006.90px;transform:scaleY(1.07);transform-origin:0 73.5%;-webkit-text-stroke:0.12px;">DB Update</div>
<div class="a" style="left:1119.70px;top:413.05px;width:1.00px;height:15.23px;background:#9a9a9a"></div>
<div class="t" style="top:415.72px;font-size:11.2px;line-height:12.69px;color:#2b25c9;font-family:'Liberation Mono',monospace;left:1121.80px;transform:scaleY(1.07);transform-origin:0 73.5%;-webkit-text-stroke:0.12px;">Error</div>
<div class="a" style="left:1186.70px;top:413.05px;width:1.00px;height:15.23px;background:#9a9a9a"></div>
<div class="t" style="top:415.72px;font-size:11.2px;line-height:12.69px;color:#2b25c9;font-family:'Liberation Mono',monospace;left:1188.80px;transform:scaleY(1.07);transform-origin:0 73.5%;-webkit-text-stroke:0.12px;">u</div>
<div class="a" style="left:271.00px;top:428.28px;width:921.90px;height:15.23px;background:#b9d0e7;border-bottom:1px solid #b5b5b5"></div>
<div class="t" style="top:430.95px;font-size:11.2px;line-height:12.69px;color:#111;font-family:'Liberation Mono',monospace;left:-273.80px;width:600px;text-align:right;transform:scaleY(1.07);transform-origin:0 73.5%;-webkit-text-stroke:0.12px;">3997466</div>
<div class="a" style="left:326.90px;top:428.28px;width:1.00px;height:15.23px;background:#9a9a9a"></div>
<div class="t" style="top:430.95px;font-size:11.2px;line-height:12.69px;color:#111;font-family:'Liberation Mono',monospace;left:329.00px;transform:scaleY(1.07);transform-origin:0 73.5%;-webkit-text-stroke:0.12px;">2018-07-17 16:34</div>
<div class="a" style="left:440.80px;top:428.28px;width:1.00px;height:15.23px;background:#9a9a9a"></div>
<div class="t" style="top:430.95px;font-size:11.2px;line-height:12.69px;color:#111;font-family:'Liberation Mono',monospace;left:442.90px;transform:scaleY(1.07);transform-origin:0 73.5%;-webkit-text-stroke:0.12px;">Pallet Status Change</div>
<div class="a" style="left:622.80px;top:428.28px;width:1.00px;height:15.23px;background:#9a9a9a"></div>
<div class="t" style="top:430.95px;font-size:11.2px;line-height:12.69px;color:#111;font-family:'Liberation Mono',monospace;left:624.90px;transform:scaleY(1.07);transform-origin:0 73.5%;-webkit-text-stroke:0.12px;">0000000553500396</div>
<div class="a" style="left:775.50px;top:428.28px;width:1.00px;height:15.23px;background:#9a9a9a"></div>
<div class="t" style="top:430.95px;font-size:11.2px;line-height:12.69px;color:#111;font-family:'Liberation Mono',monospace;left:777.60px;transform:scaleY(1.07);transform-origin:0 73.5%;-webkit-text-stroke:0.12px;">Order Number=0015698462</div>
<div class="a" style="left:948.20px;top:428.28px;width:1.00px;height:15.23px;background:#9a9a9a"></div>
<div class="t" style="top:430.95px;font-size:11.2px;line-height:12.69px;color:#111;font-family:'Liberation Mono',monospace;left:950.30px;transform:scaleY(1.07);transform-origin:0 73.5%;-webkit-text-stroke:0.12px;">Input</div>
<div class="a" style="left:1004.80px;top:428.28px;width:1.00px;height:15.23px;background:#9a9a9a"></div>
<div class="t" style="top:430.95px;font-size:11.2px;line-height:12.69px;color:#111;font-family:'Liberation Mono',monospace;left:1006.90px;transform:scaleY(1.07);transform-origin:0 73.5%;-webkit-text-stroke:0.12px;">DB Update</div>
<div class="a" style="left:1119.70px;top:428.28px;width:1.00px;height:15.23px;background:#9a9a9a"></div>
<div class="t" style="top:430.95px;font-size:11.2px;line-height:12.69px;color:#111;font-family:'Liberation Mono',monospace;left:1121.80px;transform:scaleY(1.07);transform-origin:0 73.5%;-webkit-text-stroke:0.12px;">Error</div>
<div class="a" style="left:1186.70px;top:428.28px;width:1.00px;height:15.23px;background:#9a9a9a"></div>
<div class="t" style="top:430.95px;font-size:11.2px;line-height:12.69px;color:#111;font-family:'Liberation Mono',monospace;left:1188.80px;transform:scaleY(1.07);transform-origin:0 73.5%;-webkit-text-stroke:0.12px;">u</div>
<div class="a" style="left:623.50px;top:428.28px;width:152.30px;height:15.23px;border:1px solid #6f90b8"></div>
<div class="a" style="left:271.00px;top:443.51px;width:921.90px;height:15.23px;background:#effff0;border-bottom:1px solid #b5b5b5"></div>
<div class="t" style="top:446.18px;font-size:11.2px;line-height:12.69px;color:#2b25c9;font-family:'Liberation Mono',monospace;left:-273.80px;width:600px;text-align:right;transform:scaleY(1.07);transform-origin:0 73.5%;-webkit-text-stroke:0.12px;">3997465</div>
<div class="a" style="left:326.90px;top:443.51px;width:1.00px;height:15.23px;background:#9a9a9a"></div>
<div class="t" style="top:446.18px;font-size:11.2px;line-height:12.69px;color:#2b25c9;font-family:'Liberation Mono',monospace;left:329.00px;transform:scaleY(1.07);transform-origin:0 73.5%;-webkit-text-stroke:0.12px;">2018-07-17 16:34</div>
<div class="a" style="left:440.80px;top:443.51px;width:1.00px;height:15.23px;background:#9a9a9a"></div>
<div class="t" style="top:446.18px;font-size:11.2px;line-height:12.69px;color:#2b25c9;font-family:'Liberation Mono',monospace;left:442.90px;transform:scaleY(1.07);transform-origin:0 73.5%;-webkit-text-stroke:0.12px;">Pallet Status Change</div>
<div class="a" style="left:622.80px;top:443.51px;width:1.00px;height:15.23px;background:#9a9a9a"></div>
<div class="t" style="top:446.18px;font-size:11.2px;line-height:12.69px;color:#2b25c9;font-family:'Liberation Mono',monospace;left:624.90px;transform:scaleY(1.07);transform-origin:0 73.5%;-webkit-text-stroke:0.12px;">0000000553495533</div>
<div class="a" style="left:775.50px;top:443.51px;width:1.00px;height:15.23px;background:#9a9a9a"></div>
<div class="t" style="top:446.18px;font-size:11.2px;line-height:12.69px;color:#2b25c9;font-family:'Liberation Mono',monospace;left:777.60px;transform:scaleY(1.07);transform-origin:0 73.5%;-webkit-text-stroke:0.12px;">Order Number=0015698460</div>
<div class="a" style="left:948.20px;top:443.51px;width:1.00px;height:15.23px;background:#9a9a9a"></div>
<div class="t" style="top:446.18px;font-size:11.2px;line-height:12.69px;color:#2b25c9;font-family:'Liberation Mono',monospace;left:950.30px;transform:scaleY(1.07);transform-origin:0 73.5%;-webkit-text-stroke:0.12px;">Input</div>
<div class="a" style="left:1004.80px;top:443.51px;width:1.00px;height:15.23px;background:#9a9a9a"></div>
<div class="t" style="top:446.18px;font-size:11.2px;line-height:12.69px;color:#2b25c9;font-family:'Liberation Mono',monospace;left:1006.90px;transform:scaleY(1.07);transform-origin:0 73.5%;-webkit-text-stroke:0.12px;">DB Update</div>
<div class="a" style="left:1119.70px;top:443.51px;width:1.00px;height:15.23px;background:#9a9a9a"></div>
<div class="t" style="top:446.18px;font-size:11.2px;line-height:12.69px;color:#2b25c9;font-family:'Liberation Mono',monospace;left:1121.80px;transform:scaleY(1.07);transform-origin:0 73.5%;-webkit-text-stroke:0.12px;">Error</div>
<div class="a" style="left:1186.70px;top:443.51px;width:1.00px;height:15.23px;background:#9a9a9a"></div>
<div class="t" style="top:446.18px;font-size:11.2px;line-height:12.69px;color:#2b25c9;font-family:'Liberation Mono',monospace;left:1188.80px;transform:scaleY(1.07);transform-origin:0 73.5%;-webkit-text-stroke:0.12px;">u</div>
<div class="a" style="left:271.00px;top:458.74px;width:921.90px;height:15.23px;background:#ffe0e0;border-bottom:1px solid #b5b5b5"></div>
<div class="t" style="top:461.41px;font-size:11.2px;line-height:12.69px;color:#2b25c9;font-family:'Liberation Mono',monospace;left:-273.80px;width:600px;text-align:right;transform:scaleY(1.07);transform-origin:0 73.5%;-webkit-text-stroke:0.12px;">3997464</div>
<div class="a" style="left:326.90px;top:458.74px;width:1.00px;height:15.23px;background:#9a9a9a"></div>
<div class="t" style="top:461.41px;font-size:11.2px;line-height:12.69px;color:#2b25c9;font-family:'Liberation Mono',monospace;left:329.00px;transform:scaleY(1.07);transform-origin:0 73.5%;-webkit-text-stroke:0.12px;">2018-07-17 16:34</div>
<div class="a" style="left:440.80px;top:458.74px;width:1.00px;height:15.23px;background:#9a9a9a"></div>
<div class="t" style="top:461.41px;font-size:11.2px;line-height:12.69px;color:#2b25c9;font-family:'Liberation Mono',monospace;left:442.90px;transform:scaleY(1.07);transform-origin:0 73.5%;-webkit-text-stroke:0.12px;">Production Declaration</div>
<div class="a" style="left:622.80px;top:458.74px;width:1.00px;height:15.23px;background:#9a9a9a"></div>
<div class="t" style="top:461.41px;font-size:11.2px;line-height:12.69px;color:#2b25c9;font-family:'Liberation Mono',monospace;left:624.90px;transform:scaleY(1.07);transform-origin:0 73.5%;-webkit-text-stroke:0.12px;">14322958</div>
<div class="a" style="left:775.50px;top:458.74px;width:1.00px;height:15.23px;background:#9a9a9a"></div>
<div class="t" style="top:461.41px;font-size:11.2px;line-height:12.69px;color:#2b25c9;font-family:'Liberation Mono',monospace;left:777.60px;transform:scaleY(1.07);transform-origin:0 73.5%;-webkit-text-stroke:0.12px;">SSCC=350001615030744746</div>
<div class="a" style="left:948.20px;top:458.74px;width:1.00px;height:15.23px;background:#9a9a9a"></div>
<div class="t" style="top:461.41px;font-size:11.2px;line-height:12.69px;color:#2b25c9;font-family:'Liberation Mono',monospace;left:950.30px;transform:scaleY(1.07);transform-origin:0 73.5%;-webkit-text-stroke:0.12px;">Output</div>
<div class="a" style="left:1004.80px;top:458.74px;width:1.00px;height:15.23px;background:#9a9a9a"></div>
<div class="t" style="top:461.41px;font-size:11.2px;line-height:12.69px;color:#2b25c9;font-family:'Liberation Mono',monospace;left:1006.90px;transform:scaleY(1.07);transform-origin:0 73.5%;-webkit-text-stroke:0.12px;">File Write</div>
<div class="a" style="left:1119.70px;top:458.74px;width:1.00px;height:15.23px;background:#9a9a9a"></div>
<div class="t" style="top:461.41px;font-size:11.2px;line-height:12.69px;color:#2b25c9;font-family:'Liberation Mono',monospace;left:1121.80px;transform:scaleY(1.07);transform-origin:0 73.5%;-webkit-text-stroke:0.12px;">Success</div>
<div class="a" style="left:1186.70px;top:458.74px;width:1.00px;height:15.23px;background:#9a9a9a"></div>
<div class="t" style="top:461.41px;font-size:11.2px;line-height:12.69px;color:#2b25c9;font-family:'Liberation Mono',monospace;left:1188.80px;transform:scaleY(1.07);transform-origin:0 73.5%;-webkit-text-stroke:0.12px;">u</div>
<div class="a" style="left:271.00px;top:473.97px;width:921.90px;height:15.23px;background:#effff0;border-bottom:1px solid #b5b5b5"></div>
<div class="t" style="top:476.64px;font-size:11.2px;line-height:12.69px;color:#2b25c9;font-family:'Liberation Mono',monospace;left:-273.80px;width:600px;text-align:right;transform:scaleY(1.07);transform-origin:0 73.5%;-webkit-text-stroke:0.12px;">3997463</div>
<div class="a" style="left:326.90px;top:473.97px;width:1.00px;height:15.23px;background:#9a9a9a"></div>
<div class="t" style="top:476.64px;font-size:11.2px;line-height:12.69px;color:#2b25c9;font-family:'Liberation Mono',monospace;left:329.00px;transform:scaleY(1.07);transform-origin:0 73.5%;-webkit-text-stroke:0.12px;">2018-07-17 16:34</div>
<div class="a" style="left:440.80px;top:473.97px;width:1.00px;height:15.23px;background:#9a9a9a"></div>
<div class="t" style="top:476.64px;font-size:11.2px;line-height:12.69px;color:#2b25c9;font-family:'Liberation Mono',monospace;left:442.90px;transform:scaleY(1.07);transform-origin:0 73.5%;-webkit-text-stroke:0.12px;">Production Declaration</div>
<div class="a" style="left:622.80px;top:473.97px;width:1.00px;height:15.23px;background:#9a9a9a"></div>
<div class="t" style="top:476.64px;font-size:11.2px;line-height:12.69px;color:#2b25c9;font-family:'Liberation Mono',monospace;left:624.90px;transform:scaleY(1.07);transform-origin:0 73.5%;-webkit-text-stroke:0.12px;">14322957</div>
<div class="a" style="left:775.50px;top:473.97px;width:1.00px;height:15.23px;background:#9a9a9a"></div>
<div class="t" style="top:476.64px;font-size:11.2px;line-height:12.69px;color:#2b25c9;font-family:'Liberation Mono',monospace;left:777.60px;transform:scaleY(1.07);transform-origin:0 73.5%;-webkit-text-stroke:0.12px;">SSCC=350001615030744739</div>
<div class="a" style="left:948.20px;top:473.97px;width:1.00px;height:15.23px;background:#9a9a9a"></div>
<div class="t" style="top:476.64px;font-size:11.2px;line-height:12.69px;color:#2b25c9;font-family:'Liberation Mono',monospace;left:950.30px;transform:scaleY(1.07);transform-origin:0 73.5%;-webkit-text-stroke:0.12px;">Output</div>
<div class="a" style="left:1004.80px;top:473.97px;width:1.00px;height:15.23px;background:#9a9a9a"></div>
<div class="t" style="top:476.64px;font-size:11.2px;line-height:12.69px;color:#2b25c9;font-family:'Liberation Mono',monospace;left:1006.90px;transform:scaleY(1.07);transform-origin:0 73.5%;-webkit-text-stroke:0.12px;">File Write</div>
<div class="a" style="left:1119.70px;top:473.97px;width:1.00px;height:15.23px;background:#9a9a9a"></div>
<div class="t" style="top:476.64px;font-size:11.2px;line-height:12.69px;color:#2b25c9;font-family:'Liberation Mono',monospace;left:1121.80px;transform:scaleY(1.07);transform-origin:0 73.5%;-webkit-text-stroke:0.12px;">Success</div>
<div class="a" style="left:1186.70px;top:473.97px;width:1.00px;height:15.23px;background:#9a9a9a"></div>
<div class="t" style="top:476.64px;font-size:11.2px;line-height:12.69px;color:#2b25c9;font-family:'Liberation Mono',monospace;left:1188.80px;transform:scaleY(1.07);transform-origin:0 73.5%;-webkit-text-stroke:0.12px;">u</div>
<div class="a" style="left:271.00px;top:489.20px;width:921.90px;height:15.23px;background:#ffe0e0;border-bottom:1px solid #b5b5b5"></div>
<div class="t" style="top:491.87px;font-size:11.2px;line-height:12.69px;color:#2b25c9;font-family:'Liberation Mono',monospace;left:-273.80px;width:600px;text-align:right;transform:scaleY(1.07);transform-origin:0 73.5%;-webkit-text-stroke:0.12px;">3997462</div>
<div class="a" style="left:326.90px;top:489.20px;width:1.00px;height:15.23px;background:#9a9a9a"></div>
<div class="t" style="top:491.87px;font-size:11.2px;line-height:12.69px;color:#2b25c9;font-family:'Liberation Mono',monospace;left:329.00px;transform:scaleY(1.07);transform-origin:0 73.5%;-webkit-text-stroke:0.12px;">2018-07-17 16:34</div>
<div class="a" style="left:440.80px;top:489.20px;width:1.00px;height:15.23px;background:#9a9a9a"></div>
<div class="t" style="top:491.87px;font-size:11.2px;line-height:12.69px;color:#2b25c9;font-family:'Liberation Mono',monospace;left:442.90px;transform:scaleY(1.07);transform-origin:0 73.5%;-webkit-text-stroke:0.12px;">Pallet Status Change</div>
<div class="a" style="left:622.80px;top:489.20px;width:1.00px;height:15.23px;background:#9a9a9a"></div>
<div class="t" style="top:491.87px;font-size:11.2px;line-height:12.69px;color:#2b25c9;font-family:'Liberation Mono',monospace;left:624.90px;transform:scaleY(1.07);transform-origin:0 73.5%;-webkit-text-stroke:0.12px;">0000000553499133</div>
<div class="a" style="left:775.50px;top:489.20px;width:1.00px;height:15.23px;background:#9a9a9a"></div>
<div class="t" style="top:491.87px;font-size:11.2px;line-height:12.69px;color:#2b25c9;font-family:'Liberation Mono',monospace;left:777.60px;transform:scaleY(1.07);transform-origin:0 73.5%;-webkit-text-stroke:0.12px;">Order Number=0015698461</div>
<div class="a" style="left:948.20px;top:489.20px;width:1.00px;height:15.23px;background:#9a9a9a"></div>
<div class="t" style="top:491.87px;font-size:11.2px;line-height:12.69px;color:#2b25c9;font-family:'Liberation Mono',monospace;left:950.30px;transform:scaleY(1.07);transform-origin:0 73.5%;-webkit-text-stroke:0.12px;">Input</div>
<div class="a" style="left:1004.80px;top:489.20px;width:1.00px;height:15.23px;background:#9a9a9a"></div>
<div class="t" style="top:491.87px;font-size:11.2px;line-height:12.69px;color:#2b25c9;font-family:'Liberation Mono',monospace;left:1006.90px;transform:scaleY(1.07);transform-origin:0 73.5%;-webkit-text-stroke:0.12px;">DB Update</div>
<div class="a" style="left:1119.70px;top:489.20px;width:1.00px;height:15.23px;background:#9a9a9a"></div>
<div class="t" style="top:491.87px;font-size:11.2px;line-height:12.69px;color:#2b25c9;font-family:'Liberation Mono',monospace;left:1121.80px;transform:scaleY(1.07);transform-origin:0 73.5%;-webkit-text-stroke:0.12px;">Error</div>
<div class="a" style="left:1186.70px;top:489.20px;width:1.00px;height:15.23px;background:#9a9a9a"></div>
<div class="t" style="top:491.87px;font-size:11.2px;line-height:12.69px;color:#2b25c9;font-family:'Liberation Mono',monospace;left:1188.80px;transform:scaleY(1.07);transform-origin:0 73.5%;-webkit-text-stroke:0.12px;">u</div>
<div class="a" style="left:271.00px;top:504.43px;width:921.90px;height:15.23px;background:#effff0;border-bottom:1px solid #b5b5b5"></div>
<div class="t" style="top:507.10px;font-size:11.2px;line-height:12.69px;color:#2b25c9;font-family:'Liberation Mono',monospace;left:-273.80px;width:600px;text-align:right;transform:scaleY(1.07);transform-origin:0 73.5%;-webkit-text-stroke:0.12px;">3997461</div>
<div class="a" style="left:326.90px;top:504.43px;width:1.00px;height:15.23px;background:#9a9a9a"></div>
<div class="t" style="top:507.10px;font-size:11.2px;line-height:12.69px;color:#2b25c9;font-family:'Liberation Mono',monospace;left:329.00px;transform:scaleY(1.07);transform-origin:0 73.5%;-webkit-text-stroke:0.12px;">2018-07-17 16:34</div>
<div class="a" style="left:440.80px;top:504.43px;width:1.00px;height:15.23px;background:#9a9a9a"></div>
<div class="t" style="top:507.10px;font-size:11.2px;line-height:12.69px;color:#2b25c9;font-family:'Liberation Mono',monospace;left:442.90px;transform:scaleY(1.07);transform-origin:0 73.5%;-webkit-text-stroke:0.12px;">Pallet Status Change</div>
<div class="a" style="left:622.80px;top:504.43px;width:1.00px;height:15.23px;background:#9a9a9a"></div>
<div class="t" style="top:507.10px;font-size:11.2px;line-height:12.69px;color:#2b25c9;font-family:'Liberation Mono',monospace;left:624.90px;transform:scaleY(1.07);transform-origin:0 73.5%;-webkit-text-stroke:0.12px;">0000000553441014</div>
<div class="a" style="left:775.50px;top:504.43px;width:1.00px;height:15.23px;background:#9a9a9a"></div>
<div class="t" style="top:507.10px;font-size:11.2px;line-height:12.69px;color:#2b25c9;font-family:'Liberation Mono',monospace;left:777.60px;transform:scaleY(1.07);transform-origin:0 73.5%;-webkit-text-stroke:0.12px;">Order Number=0015698464</div>
<div class="a" style="left:948.20px;top:504.43px;width:1.00px;height:15.23px;background:#9a9a9a"></div>
<div class="t" style="top:507.10px;font-size:11.2px;line-height:12.69px;color:#2b25c9;font-family:'Liberation Mono',monospace;left:950.30px;transform:scaleY(1.07);transform-origin:0 73.5%;-webkit-text-stroke:0.12px;">Input</div>
<div class="a" style="left:1004.80px;top:504.43px;width:1.00px;height:15.23px;background:#9a9a9a"></div>
<div class="t" style="top:507.10px;font-size:11.2px;line-height:12.69px;color:#2b25c9;font-family:'Liberation Mono',monospace;left:1006.90px;transform:scaleY(1.07);transform-origin:0 73.5%;-webkit-text-stroke:0.12px;">DB Update</div>
<div class="a" style="left:1119.70px;top:504.43px;width:1.00px;height:15.23px;background:#9a9a9a"></div>
<div class="t" style="top:507.10px;font-size:11.2px;line-height:12.69px;color:#2b25c9;font-family:'Liberation Mono',monospace;left:1121.80px;transform:scaleY(1.07);transform-origin:0 73.5%;-webkit-text-stroke:0.12px;">Error</div>
<div class="a" style="left:1186.70px;top:504.43px;width:1.00px;height:15.23px;background:#9a9a9a"></div>
<div class="t" style="top:507.10px;font-size:11.2px;line-height:12.69px;color:#2b25c9;font-family:'Liberation Mono',monospace;left:1188.80px;transform:scaleY(1.07);transform-origin:0 73.5%;-webkit-text-stroke:0.12px;">u</div>
<div class="a" style="left:271.00px;top:519.66px;width:921.90px;height:15.23px;background:#ffe0e0;border-bottom:1px solid #b5b5b5"></div>
<div class="t" style="top:522.33px;font-size:11.2px;line-height:12.69px;color:#2b25c9;font-family:'Liberation Mono',monospace;left:-273.80px;width:600px;text-align:right;transform:scaleY(1.07);transform-origin:0 73.5%;-webkit-text-stroke:0.12px;">3997460</div>
<div class="a" style="left:326.90px;top:519.66px;width:1.00px;height:15.23px;background:#9a9a9a"></div>
<div class="t" style="top:522.33px;font-size:11.2px;line-height:12.69px;color:#2b25c9;font-family:'Liberation Mono',monospace;left:329.00px;transform:scaleY(1.07);transform-origin:0 73.5%;-webkit-text-stroke:0.12px;">2018-07-17 16:34</div>
<div class="a" style="left:440.80px;top:519.66px;width:1.00px;height:15.23px;background:#9a9a9a"></div>
<div class="t" style="top:522.33px;font-size:11.2px;line-height:12.69px;color:#2b25c9;font-family:'Liberation Mono',monospace;left:442.90px;transform:scaleY(1.07);transform-origin:0 73.5%;-webkit-text-stroke:0.12px;">Pallet Status Change</div>
<div class="a" style="left:622.80px;top:519.66px;width:1.00px;height:15.23px;background:#9a9a9a"></div>
<div class="t" style="top:522.33px;font-size:11.2px;line-height:12.69px;color:#2b25c9;font-family:'Liberation Mono',monospace;left:624.90px;transform:scaleY(1.07);transform-origin:0 73.5%;-webkit-text-stroke:0.12px;">0000000553474806</div>
<div class="a" style="left:775.50px;top:519.66px;width:1.00px;height:15.23px;background:#9a9a9a"></div>
<div class="t" style="top:522.33px;font-size:11.2px;line-height:12.69px;color:#2b25c9;font-family:'Liberation Mono',monospace;left:777.60px;transform:scaleY(1.07);transform-origin:0 73.5%;-webkit-text-stroke:0.12px;">Order Number=0015698466</div>
<div class="a" style="left:948.20px;top:519.66px;width:1.00px;height:15.23px;background:#9a9a9a"></div>
<div class="t" style="top:522.33px;font-size:11.2px;line-height:12.69px;color:#2b25c9;font-family:'Liberation Mono',monospace;left:950.30px;transform:scaleY(1.07);transform-origin:0 73.5%;-webkit-text-stroke:0.12px;">Input</div>
<div class="a" style="left:1004.80px;top:519.66px;width:1.00px;height:15.23px;background:#9a9a9a"></div>
<div class="t" style="top:522.33px;font-size:11.2px;line-height:12.69px;color:#2b25c9;font-family:'Liberation Mono',monospace;left:1006.90px;transform:scaleY(1.07);transform-origin:0 73.5%;-webkit-text-stroke:0.12px;">DB Update</div>
<div class="a" style="left:1119.70px;top:519.66px;width:1.00px;height:15.23px;background:#9a9a9a"></div>
<div class="t" style="top:522.33px;font-size:11.2px;line-height:12.69px;color:#2b25c9;font-family:'Liberation Mono',monospace;left:1121.80px;transform:scaleY(1.07);transform-origin:0 73.5%;-webkit-text-stroke:0.12px;">Error</div>
<div class="a" style="left:1186.70px;top:519.66px;width:1.00px;height:15.23px;background:#9a9a9a"></div>
<div class="t" style="top:522.33px;font-size:11.2px;line-height:12.69px;color:#2b25c9;font-family:'Liberation Mono',monospace;left:1188.80px;transform:scaleY(1.07);transform-origin:0 73.5%;-webkit-text-stroke:0.12px;">u</div>
<div class="a" style="left:271.00px;top:534.89px;width:921.90px;height:15.23px;background:#effff0;border-bottom:1px solid #b5b5b5"></div>
<div class="t" style="top:537.56px;font-size:11.2px;line-height:12.69px;color:#2b25c9;font-family:'Liberation Mono',monospace;left:-273.80px;width:600px;text-align:right;transform:scaleY(1.07);transform-origin:0 73.5%;-webkit-text-stroke:0.12px;">3997459</div>
<div class="a" style="left:326.90px;top:534.89px;width:1.00px;height:15.23px;background:#9a9a9a"></div>
<div class="t" style="top:537.56px;font-size:11.2px;line-height:12.69px;color:#2b25c9;font-family:'Liberation Mono',monospace;left:329.00px;transform:scaleY(1.07);transform-origin:0 73.5%;-webkit-text-stroke:0.12px;">2018-07-17 16:34</div>
<div class="a" style="left:440.80px;top:534.89px;width:1.00px;height:15.23px;background:#9a9a9a"></div>
<div class="t" style="top:537.56px;font-size:11.2px;line-height:12.69px;color:#2b25c9;font-family:'Liberation Mono',monospace;left:442.90px;transform:scaleY(1.07);transform-origin:0 73.5%;-webkit-text-stroke:0.12px;">Pallet Status Change</div>
<div class="a" style="left:622.80px;top:534.89px;width:1.00px;height:15.23px;background:#9a9a9a"></div>
<div class="t" style="top:537.56px;font-size:11.2px;line-height:12.69px;color:#2b25c9;font-family:'Liberation Mono',monospace;left:624.90px;transform:scaleY(1.07);transform-origin:0 73.5%;-webkit-text-stroke:0.12px;">0000000553512237</div>
<div class="a" style="left:775.50px;top:534.89px;width:1.00px;height:15.23px;background:#9a9a9a"></div>
<div class="t" style="top:537.56px;font-size:11.2px;line-height:12.69px;color:#2b25c9;font-family:'Liberation Mono',monospace;left:777.60px;transform:scaleY(1.07);transform-origin:0 73.5%;-webkit-text-stroke:0.12px;">Order Number=0015698467</div>
<div class="a" style="left:948.20px;top:534.89px;width:1.00px;height:15.23px;background:#9a9a9a"></div>
<div class="t" style="top:537.56px;font-size:11.2px;line-height:12.69px;color:#2b25c9;font-family:'Liberation Mono',monospace;left:950.30px;transform:scaleY(1.07);transform-origin:0 73.5%;-webkit-text-stroke:0.12px;">Input</div>
<div class="a" style="left:1004.80px;top:534.89px;width:1.00px;height:15.23px;background:#9a9a9a"></div>
<div class="t" style="top:537.56px;font-size:11.2px;line-height:12.69px;color:#2b25c9;font-family:'Liberation Mono',monospace;left:1006.90px;transform:scaleY(1.07);transform-origin:0 73.5%;-webkit-text-stroke:0.12px;">DB Update</div>
<div class="a" style="left:1119.70px;top:534.89px;width:1.00px;height:15.23px;background:#9a9a9a"></div>
<div class="t" style="top:537.56px;font-size:11.2px;line-height:12.69px;color:#2b25c9;font-family:'Liberation Mono',monospace;left:1121.80px;transform:scaleY(1.07);transform-origin:0 73.5%;-webkit-text-stroke:0.12px;">Error</div>
<div class="a" style="left:1186.70px;top:534.89px;width:1.00px;height:15.23px;background:#9a9a9a"></div>
<div class="t" style="top:537.56px;font-size:11.2px;line-height:12.69px;color:#2b25c9;font-family:'Liberation Mono',monospace;left:1188.80px;transform:scaleY(1.07);transform-origin:0 73.5%;-webkit-text-stroke:0.12px;">u</div>
<div class="a" style="left:271.00px;top:550.12px;width:921.90px;height:15.23px;background:#ffe0e0;border-bottom:1px solid #b5b5b5"></div>
<div class="t" style="top:552.79px;font-size:11.2px;line-height:12.69px;color:#2b25c9;font-family:'Liberation Mono',monospace;left:-273.80px;width:600px;text-align:right;transform:scaleY(1.07);transform-origin:0 73.5%;-webkit-text-stroke:0.12px;">3997458</div>
<div class="a" style="left:326.90px;top:550.12px;width:1.00px;height:15.23px;background:#9a9a9a"></div>
<div class="t" style="top:552.79px;font-size:11.2px;line-height:12.69px;color:#2b25c9;font-family:'Liberation Mono',monospace;left:329.00px;transform:scaleY(1.07);transform-origin:0 73.5%;-webkit-text-stroke:0.12px;">2018-07-17 16:34</div>
<div class="a" style="left:440.80px;top:550.12px;width:1.00px;height:15.23px;background:#9a9a9a"></div>
<div class="t" style="top:552.79px;font-size:11.2px;line-height:12.69px;color:#2b25c9;font-family:'Liberation Mono',monospace;left:442.90px;transform:scaleY(1.07);transform-origin:0 73.5%;-webkit-text-stroke:0.12px;">Pallet Status Change</div>
<div class="a" style="left:622.80px;top:550.12px;width:1.00px;height:15.23px;background:#9a9a9a"></div>
<div class="t" style="top:552.79px;font-size:11.2px;line-height:12.69px;color:#2b25c9;font-family:'Liberation Mono',monospace;left:624.90px;transform:scaleY(1.07);transform-origin:0 73.5%;-webkit-text-stroke:0.12px;">0000000553507380</div>
<div class="a" style="left:775.50px;top:550.12px;width:1.00px;height:15.23px;background:#9a9a9a"></div>
<div class="t" style="top:552.79px;font-size:11.2px;line-height:12.69px;color:#2b25c9;font-family:'Liberation Mono',monospace;left:777.60px;transform:scaleY(1.07);transform-origin:0 73.5%;-webkit-text-stroke:0.12px;">Order Number=0015698465</div>
<div class="a" style="left:948.20px;top:550.12px;width:1.00px;height:15.23px;background:#9a9a9a"></div>
<div class="t" style="top:552.79px;font-size:11.2px;line-height:12.69px;color:#2b25c9;font-family:'Liberation Mono',monospace;left:950.30px;transform:scaleY(1.07);transform-origin:0 73.5%;-webkit-text-stroke:0.12px;">Input</div>
<div class="a" style="left:1004.80px;top:550.12px;width:1.00px;height:15.23px;background:#9a9a9a"></div>
<div class="t" style="top:552.79px;font-size:11.2px;line-height:12.69px;color:#2b25c9;font-family:'Liberation Mono',monospace;left:1006.90px;transform:scaleY(1.07);transform-origin:0 73.5%;-webkit-text-stroke:0.12px;">DB Update</div>
<div class="a" style="left:1119.70px;top:550.12px;width:1.00px;height:15.23px;background:#9a9a9a"></div>
<div class="t" style="top:552.79px;font-size:11.2px;line-height:12.69px;color:#2b25c9;font-family:'Liberation Mono',monospace;left:1121.80px;transform:scaleY(1.07);transform-origin:0 73.5%;-webkit-text-stroke:0.12px;">Error</div>
<div class="a" style="left:1186.70px;top:550.12px;width:1.00px;height:15.23px;background:#9a9a9a"></div>
<div class="t" style="top:552.79px;font-size:11.2px;line-height:12.69px;color:#2b25c9;font-family:'Liberation Mono',monospace;left:1188.80px;transform:scaleY(1.07);transform-origin:0 73.5%;-webkit-text-stroke:0.12px;">u</div>
<div class="a" style="left:271.00px;top:565.35px;width:921.90px;height:15.23px;background:#effff0;border-bottom:1px solid #b5b5b5"></div>
<div class="t" style="top:568.02px;font-size:11.2px;line-height:12.69px;color:#2b25c9;font-family:'Liberation Mono',monospace;left:-273.80px;width:600px;text-align:right;transform:scaleY(1.07);transform-origin:0 73.5%;-webkit-text-stroke:0.12px;">3997457</div>
<div class="a" style="left:326.90px;top:565.35px;width:1.00px;height:15.23px;background:#9a9a9a"></div>
<div class="t" style="top:568.02px;font-size:11.2px;line-height:12.69px;color:#2b25c9;font-family:'Liberation Mono',monospace;left:329.00px;transform:scaleY(1.07);transform-origin:0 73.5%;-webkit-text-stroke:0.12px;">2018-07-17 16:34</div>
<div class="a" style="left:440.80px;top:565.35px;width:1.00px;height:15.23px;background:#9a9a9a"></div>
<div class="t" style="top:568.02px;font-size:11.2px;line-height:12.69px;color:#2b25c9;font-family:'Liberation Mono',monospace;left:442.90px;transform:scaleY(1.07);transform-origin:0 73.5%;-webkit-text-stroke:0.12px;">Pallet Status Change</div>
<div class="a" style="left:622.80px;top:565.35px;width:1.00px;height:15.23px;background:#9a9a9a"></div>
<div class="t" style="top:568.02px;font-size:11.2px;line-height:12.69px;color:#2b25c9;font-family:'Liberation Mono',monospace;left:624.90px;transform:scaleY(1.07);transform-origin:0 73.5%;-webkit-text-stroke:0.12px;">0000000553508681</div>
<div class="a" style="left:775.50px;top:565.35px;width:1.00px;height:15.23px;background:#9a9a9a"></div>
<div class="t" style="top:568.02px;font-size:11.2px;line-height:12.69px;color:#2b25c9;font-family:'Liberation Mono',monospace;left:777.60px;transform:scaleY(1.07);transform-origin:0 73.5%;-webkit-text-stroke:0.12px;">Order Number=0015698455</div>
<div class="a" style="left:948.20px;top:565.35px;width:1.00px;height:15.23px;background:#9a9a9a"></div>
<div class="t" style="top:568.02px;font-size:11.2px;line-height:12.69px;color:#2b25c9;font-family:'Liberation Mono',monospace;left:950.30px;transform:scaleY(1.07);transform-origin:0 73.5%;-webkit-text-stroke:0.12px;">Input</div>
<div class="a" style="left:1004.80px;top:565.35px;width:1.00px;height:15.23px;background:#9a9a9a"></div>
<div class="t" style="top:568.02px;font-size:11.2px;line-height:12.69px;color:#2b25c9;font-family:'Liberation Mono',monospace;left:1006.90px;transform:scaleY(1.07);transform-origin:0 73.5%;-webkit-text-stroke:0.12px;">DB Update</div>
<div class="a" style="left:1119.70px;top:565.35px;width:1.00px;height:15.23px;background:#9a9a9a"></div>
<div class="t" style="top:568.02px;font-size:11.2px;line-height:12.69px;color:#2b25c9;font-family:'Liberation Mono',monospace;left:1121.80px;transform:scaleY(1.07);transform-origin:0 73.5%;-webkit-text-stroke:0.12px;">Error</div>
<div class="a" style="left:1186.70px;top:565.35px;width:1.00px;height:15.23px;background:#9a9a9a"></div>
<div class="t" style="top:568.02px;font-size:11.2px;line-height:12.69px;color:#2b25c9;font-family:'Liberation Mono',monospace;left:1188.80px;transform:scaleY(1.07);transform-origin:0 73.5%;-webkit-text-stroke:0.12px;">u</div></div></div>
<div class="a" style="left:1192.90px;top:313.60px;width:14.60px;height:23.40px;background:#ececec"></div>
<div class="a" style="left:1193.20px;top:337.20px;width:14.40px;height:236.00px;background:#eeeeee;border-left:1px solid #c8c8c8"></div>
<div class="a" style="left:1193.20px;top:337.40px;width:14.40px;height:14.80px;background:#f6f6f6;border:1px solid #c8c8c8"></div>
<svg class="a" style="left:1196.80px;top:342.00px" width="7.50" height="4.50" viewBox="0 0 7.5 4.5"><path d="M0 4.5 H7.5 L3.75 0Z" fill="#1c1c1c"/></svg>
<div class="a" style="left:1193.40px;top:352.50px;width:14.20px;height:13.20px;background:linear-gradient(90deg,#d5e4f4,#f4f8fd 50%,#c8dcf0);border:1px solid #8aa6c8;border-radius:1px"></div>
<div class="a" style="left:1196.50px;top:357.20px;width:8.50px;height:3.60px;background:#a9bedb"></div>
<div class="a" style="left:1193.20px;top:558.20px;width:14.40px;height:14.40px;background:#f6f6f6;border:1px solid #c8c8c8"></div>
<svg class="a" style="left:1196.80px;top:563.00px" width="7.50" height="4.50" viewBox="0 0 7.5 4.5"><path d="M0 0 H7.5 L3.75 4.5Z" fill="#1c1c1c"/></svg>
<div class="a" style="left:271.00px;top:573.40px;width:922.00px;height:14.40px;background:#eeeeee;border-top:1px solid #b7c6d6"></div>
<div class="a" style="left:271.00px;top:573.60px;width:13.80px;height:14.20px;background:#f6f6f6;border:1px solid #c8c8c8"></div>
<svg class="a" style="left:275.20px;top:577.20px" width="4.50" height="7.50" viewBox="0 0 4.5 7.5"><path d="M4.5 0 V7.5 L0 3.75Z" fill="#1c1c1c"/></svg>
<div class="a" style="left:285.00px;top:573.80px;width:385.80px;height:13.60px;background:linear-gradient(#d8e6f5,#f6f9fd 45%,#c3d8ee);border:1px solid #8aa6c8;border-radius:1px"></div>
<div class="a" style="left:475.50px;top:577.60px;width:1.00px;height:6.00px;background:#8aa0c0"></div>
<div class="a" style="left:477.50px;top:577.60px;width:1.00px;height:6.00px;background:#8aa0c0"></div>
<div class="a" style="left:479.50px;top:577.60px;width:1.00px;height:6.00px;background:#8aa0c0"></div>
<div class="a" style="left:1178.00px;top:574.20px;width:14.60px;height:13.40px;background:#f6f6f6;border:1px solid #c8c8c8"></div>
<svg class="a" style="left:1183.30px;top:577.20px" width="4.50" height="7.50" viewBox="0 0 4.5 7.5"><path d="M0 0 V7.5 L4.5 3.75Z" fill="#1c1c1c"/></svg>
<div class="a" style="left:1193.00px;top:573.00px;width:14.80px;height:14.80px;background:#efefef;border:1px solid #c8c8c8"></div>
<div class="t" style="top:606.74px;font-size:10.45px;line-height:11.67px;color:#2a2a2a;font-family:'Liberation Sans',sans-serif;left:-230.60px;width:600px;text-align:right;">Message Date</div>
<div class="a" style="left:376.20px;top:603.20px;width:138.70px;height:18.80px;background:#ececec;border:1px solid #c2d2e4"></div><div class="t" style="top:606.64px;font-size:10.45px;line-height:11.67px;color:#222;font-family:'Liberation Sans',sans-serif;left:378.40px;">2018-07-17 16:34</div>
<div class="t" style="top:606.74px;font-size:10.45px;line-height:11.67px;color:#2a2a2a;font-family:'Liberation Sans',sans-serif;left:15.60px;width:600px;text-align:right;">Workstation</div>
<div class="a" style="left:622.30px;top:603.20px;width:359.40px;height:18.80px;background:#ececec;border:1px solid #c2d2e4"></div><div class="t" style="top:606.64px;font-size:10.45px;line-height:11.67px;color:#222;font-family:'Liberation Sans',sans-serif;left:624.50px;">ukwisa0002</div>
<div class="t" style="top:635.14px;font-size:10.45px;line-height:11.67px;color:#2a2a2a;font-family:'Liberation Sans',sans-serif;left:-228.80px;width:600px;text-align:right;">Result</div>
<div class="a" style="left:376.20px;top:631.60px;width:821.50px;height:19.20px;background:#ececec;border:1px solid #c2d2e4"></div><div class="t" style="top:635.04px;font-size:10.45px;line-height:11.67px;color:#222;font-family:'Liberation Sans',sans-serif;left:378.40px;">Some SSCC's were not found in the Commander4j database.   0 Updated. 0 Ignored (same). 3 Not found.</div>
<div class="t" style="top:663.74px;font-size:10.45px;line-height:11.67px;color:#2a2a2a;font-family:'Liberation Sans',sans-serif;left:-228.80px;width:600px;text-align:right;">Filename</div>
<div class="a" style="left:376.20px;top:660.40px;width:821.50px;height:18.80px;background:#ececec;border:1px solid #c2d2e4"></div><div class="t" style="top:663.84px;font-size:10.45px;line-height:11.67px;color:#222;font-family:'Liberation Sans',sans-serif;left:378.40px;">9d98909f-5536-4ebe-bdf3-55b48aa4c282.xml</div>
<div class="a" style="left:270.10px;top:701.60px;width:958.30px;height:21.80px;background:#f0f0f0;border:1px solid #888;border-bottom-color:#b8b8b8;border-top:1.6px solid #333;border-left:1.4px solid #333"></div>
<div class="t" style="top:707.14px;font-size:10.45px;line-height:11.67px;color:#e0101a;font-family:'Liberation Sans',sans-serif;left:272.20px;">1000 record(s) retrieved. Number of records returned constrained by user defined limit.</div>
<div class="a" style="left:0.00px;top:1031.00px;width:1442.00px;height:32.00px;background:#f2f2f2"></div>
<div class="a" style="left:0.30px;top:1031.00px;width:1439.20px;height:29.80px;background:linear-gradient(#ffffff,#fbfbfb 50%,#eeeeee);border:1px solid #cfcfcf"></div>
<div class="t" style="top:1040.81px;font-size:11.7px;line-height:13.07px;color:#111;font-family:'Liberation Sans',sans-serif;font-weight:bold;left:11.40px;">Status :</div>
<div class="t" style="top:1040.63px;font-size:11.9px;line-height:13.29px;color:#111;font-family:'Liberation Sans',sans-serif;left:65.00px;">Ready</div>
<div class="a" style="left:266.00px;top:1036.00px;width:1.00px;height:21.00px;background:#c4c4c4"></div>
<div class="t" style="top:1040.63px;font-size:11.9px;line-height:13.29px;color:#111;font-family:'Liberation Sans',sans-serif;font-weight:bold;letter-spacing:0.2px;left:276.00px;">User :</div>
<div class="t" style="top:1040.63px;font-size:11.9px;line-height:13.29px;color:#111;font-family:'Liberation Sans',sans-serif;left:319.00px;">DAVE</div>
<div class="a" style="left:359.80px;top:1036.00px;width:1.00px;height:21.00px;background:#c4c4c4"></div>
<div class="t" style="top:1040.63px;font-size:11.9px;line-height:13.29px;color:#111;font-family:'Liberation Sans',sans-serif;font-weight:bold;letter-spacing:0.2px;left:369.80px;">Host :</div>
<div class="t" style="top:1040.54px;font-size:12.0px;line-height:13.40px;color:#111;font-family:'Liberation Sans',sans-serif;letter-spacing:-0.42px;left:413.80px;">mySQL DEV</div>
<div class="a" style="left:487.30px;top:1036.00px;width:1.00px;height:21.00px;background:#c4c4c4"></div>
<div class="t" style="top:1040.63px;font-size:11.9px;line-height:13.29px;color:#111;font-family:'Liberation Sans',sans-serif;font-weight:bold;letter-spacing:0.2px;left:496.80px;">Database :</div>
<div class="t" style="top:1040.54px;font-size:12.0px;line-height:13.40px;color:#111;font-family:'Liberation Sans',sans-serif;letter-spacing:0.46px;left:568.60px;">jdbc:mysql://127.0.0.1:3306/commander4j_dev?autoReconnect=true</div>
<div class="a" style="left:973.60px;top:1036.00px;width:1.00px;height:21.00px;background:#c4c4c4"></div>
<div class="t" style="top:1040.54px;font-size:12.0px;line-height:13.40px;color:#111;font-family:'Liberation Sans',sans-serif;letter-spacing:0.9px;left:983.60px;">17-Feb-2019 19:14:39</div>
<div class="a" style="left:1129.60px;top:1036.00px;width:1.00px;height:21.00px;background:#c4c4c4"></div>
<svg class="a" style="left:0.00px;top:1058.00px" width="5.00" height="5.00" viewBox="0 0 5 5"><path d="M0 0 Q0 5 5 5 H0Z" fill="#222a3a"/></svg>
</body></html>
